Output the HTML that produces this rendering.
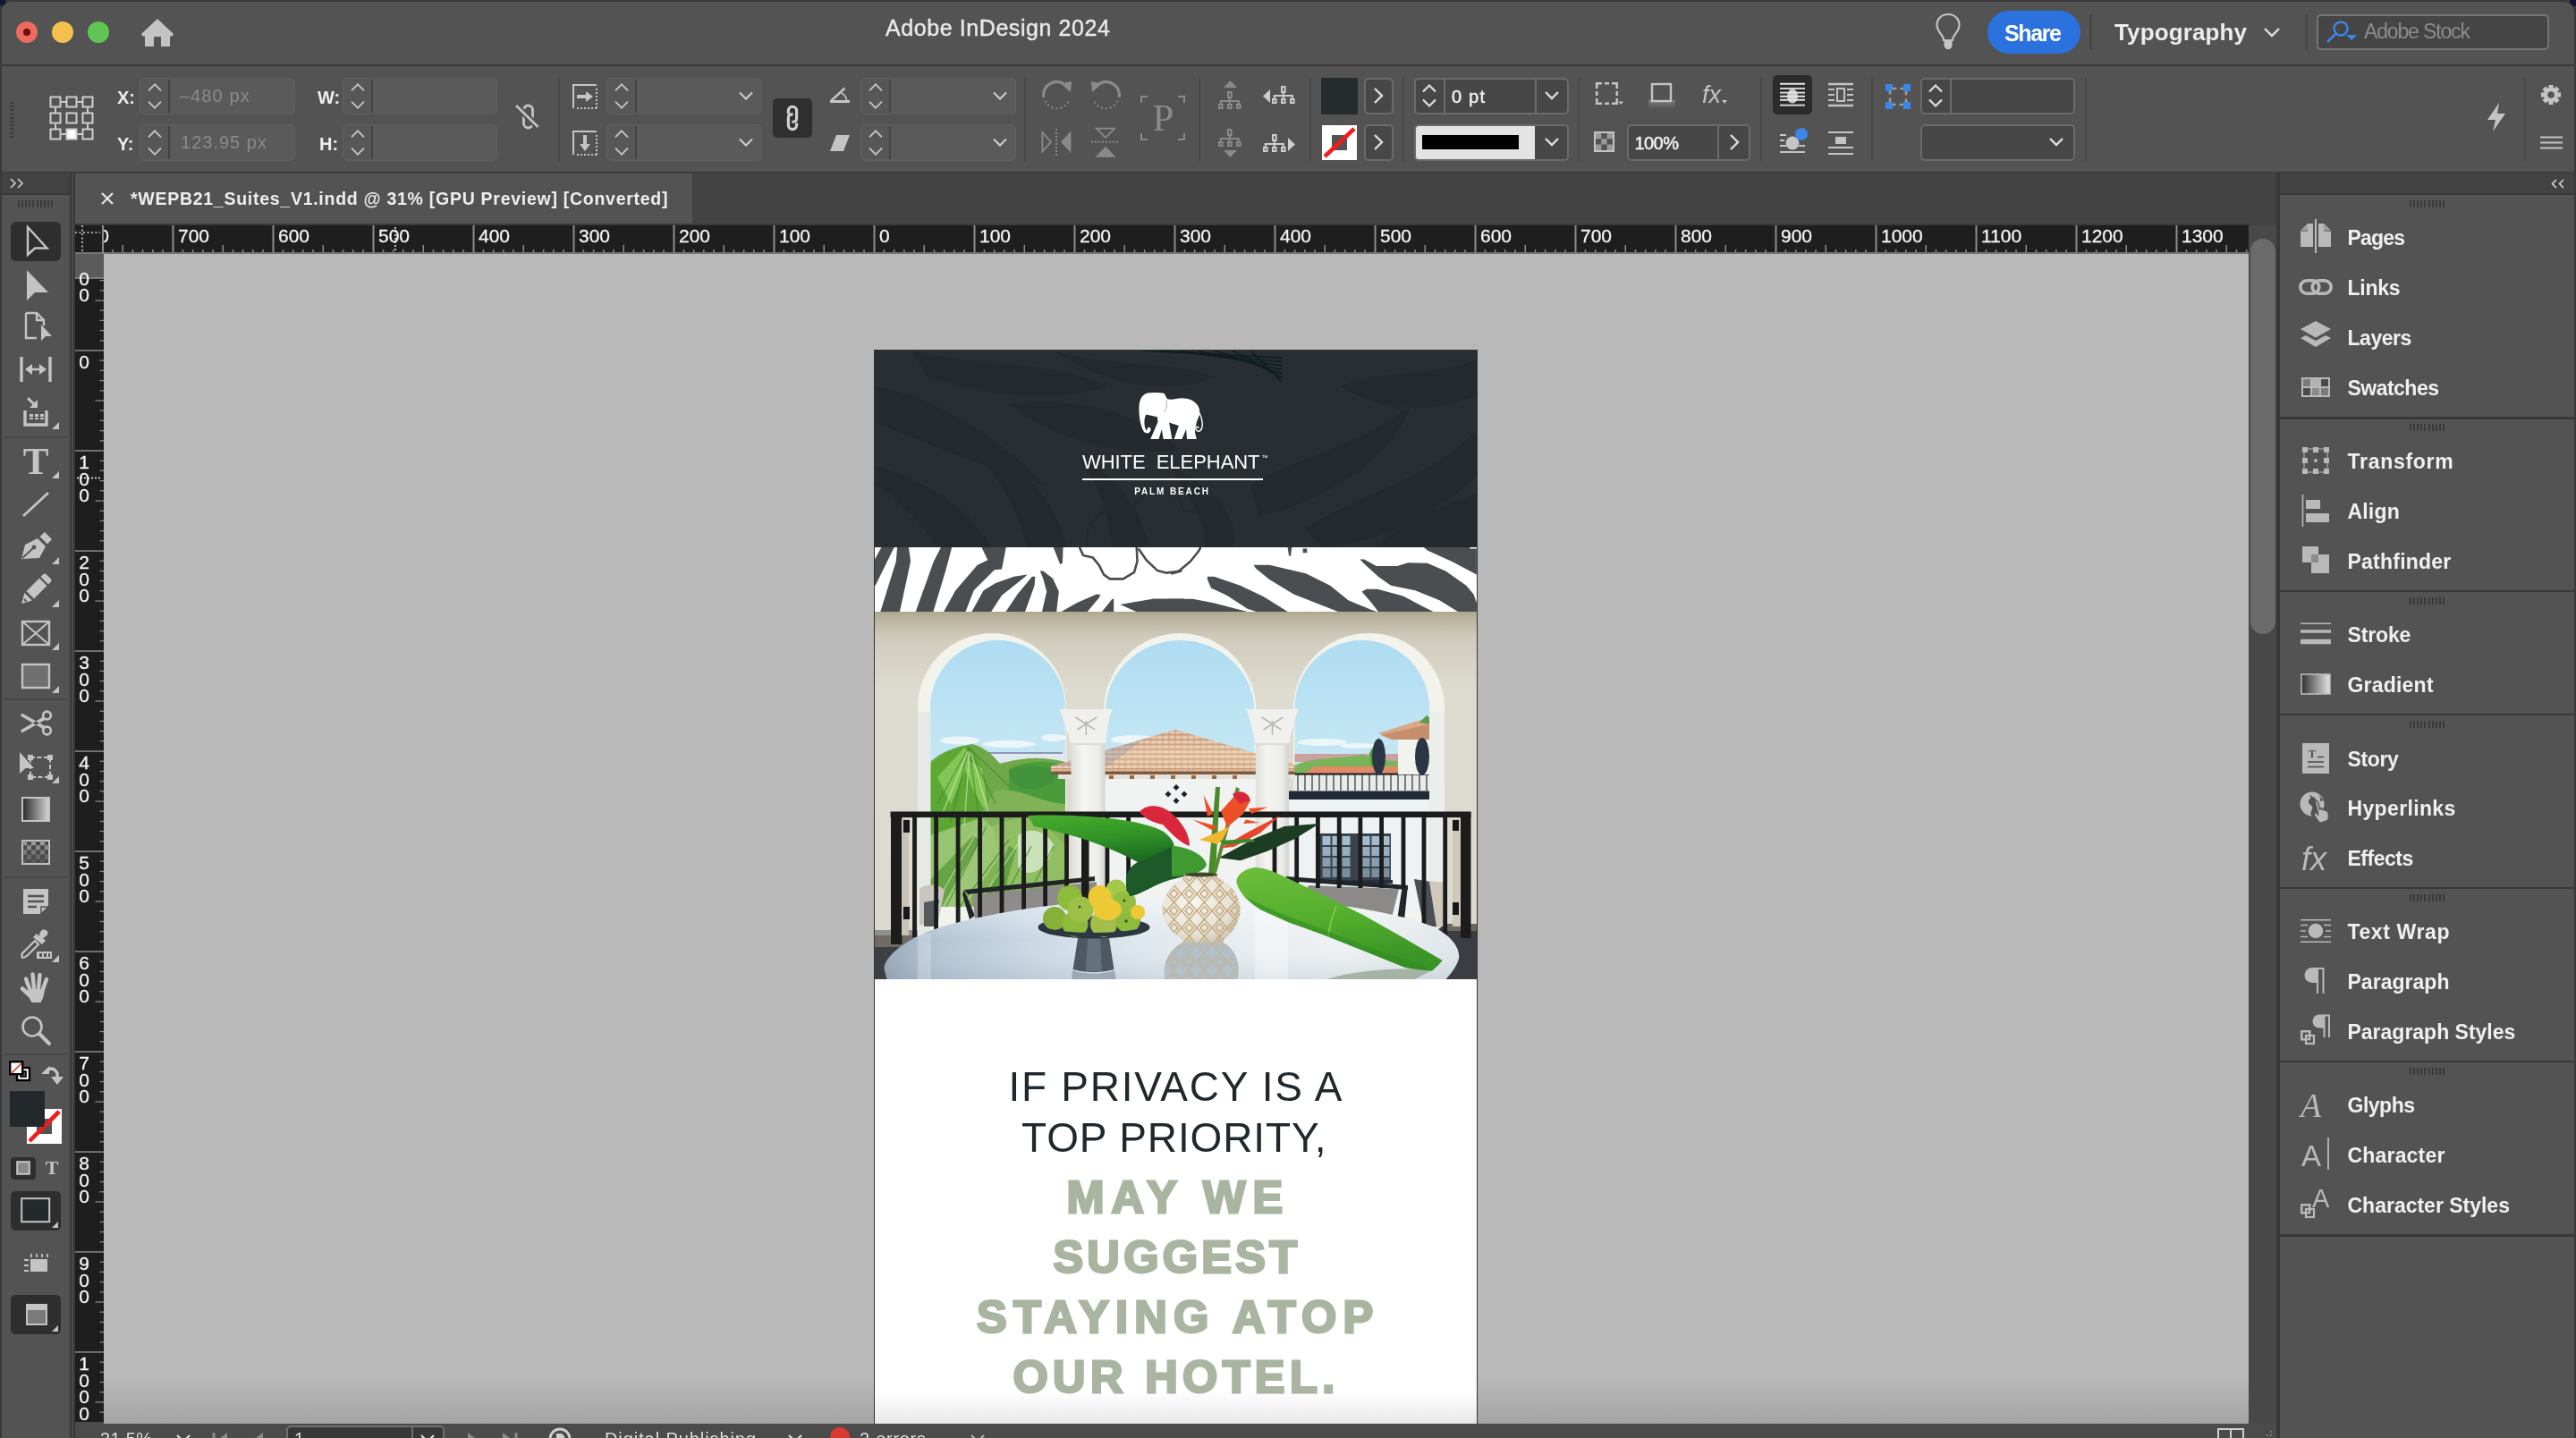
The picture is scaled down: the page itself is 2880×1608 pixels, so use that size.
<!DOCTYPE html>
<html><head><meta charset="utf-8"><title>Adobe InDesign 2024</title>
<style>
html,body{margin:0;padding:0;background:#393939;}
body{width:2880px;height:1608px;position:relative;overflow:hidden;font-family:"Liberation Sans",sans-serif;}
#root{position:absolute;left:0;top:0;width:2880px;height:1608px;overflow:hidden;will-change:transform;}
.b{position:absolute;display:block;}
.t{position:absolute;white-space:pre;}
</style></head><body><div id="root">
<div class="b" style="left:0.00px;top:0.00px;width:2880.00px;height:1608.00px;background:#393939;"></div>
<div class="b" style="left:2873.00px;top:0.00px;width:7.00px;height:7.00px;background:#15172f;"></div>
<div class="b" style="left:2.00px;top:2.00px;width:2876.00px;height:1640.00px;background:#535353;border-radius:11px 11px 0 0;"></div>
<div class="b" style="left:0.00px;top:0.00px;width:6.00px;height:6.00px;background:#0c1a33;"></div>
<div class="b" style="left:2.00px;top:2.00px;width:40.00px;height:40.00px;background:#535353;border-radius:11px 0 0 0;"></div>
<div class="b" style="left:2.00px;top:72.00px;width:2876.00px;height:2.00px;background:#383838;"></div>
<div class="b" style="left:18.00px;top:24.00px;width:24.00px;height:24.00px;background:#ed6a5e;border-radius:50%;"></div>
<div class="b" style="left:58.00px;top:24.00px;width:24.00px;height:24.00px;background:#f5bf4f;border-radius:50%;"></div>
<div class="b" style="left:98.00px;top:24.00px;width:24.00px;height:24.00px;background:#61c554;border-radius:50%;"></div>
<div class="b" style="left:26.00px;top:32.00px;width:8.00px;height:8.00px;background:#6b100b;border-radius:50%;"></div>
<svg class="b" style="left:158.00px;top:21.00px;" width="36" height="31" viewBox="0 0 36 31"><path d="M18 0 L36 17 L34.5 19.5 L32 19.5 L32 31 L22 31 L22 20 L14 20 L14 31 L4 31 L4 19.5 L1.5 19.5 L0 17 Z" fill="#c4c4c4"/></svg>
<div class="t" style="left:990.00px;top:18.74px;font:25.00px/1 'Liberation Sans',sans-serif;color:#e9e9e9;letter-spacing:0.583px;-webkit-text-stroke:0.4px #e9e9e9;">Adobe InDesign 2024</div>
<svg class="b" style="left:2160.00px;top:12.00px;" width="36" height="48" viewBox="0 0 36 48"><path d="M18 4 C10.5 4 5.5 9.5 5.5 16 C5.5 21 8.5 24 11 27.5 C12.5 29.5 13 31 13 33 L23 33 C23 31 23.5 29.5 25 27.5 C27.5 24 30.5 21 30.5 16 C30.5 9.5 25.5 4 18 4 Z" fill="none" stroke="#c4c4c4" stroke-width="2.2"/><path d="M13.5 34 L22.5 34 L22.5 40 L20 43 L16 43 L13.5 40 Z" fill="#c4c4c4"/></svg>
<div class="b" style="left:2222.00px;top:12.00px;width:104.00px;height:48.00px;background:#2c72de;border-radius:24px;"></div>
<div class="t" style="left:2241.00px;top:25.24px;font:bold 25.00px/1 'Liberation Sans',sans-serif;color:#ffffff;letter-spacing:-1.375px;">Share</div>
<div class="b" style="left:2336.00px;top:16.00px;width:3.00px;height:40.00px;background:#474747;"></div>
<div class="t" style="left:2364.00px;top:22.79px;font:bold 26.00px/1 'Liberation Sans',sans-serif;color:#ececec;letter-spacing:0.122px;">Typography</div>
<svg class="b" style="left:2528.00px;top:28.00px;" width="24" height="16" viewBox="0 0 24 16"><path d="M4 4 L12 12 L20 4" fill="none" stroke="#e0e0e0" stroke-width="2.4"/></svg>
<div class="b" style="left:2577.00px;top:16.00px;width:3.00px;height:40.00px;background:#474747;"></div>
<div class="b" style="left:2590.00px;top:16.00px;width:260.00px;height:40.00px;background:#454545;border:2px solid #757575;border-radius:5px;box-sizing:border-box;"></div>
<svg class="b" style="left:2598.00px;top:22.00px;" width="40" height="26" viewBox="0 0 40 26"><circle cx="19" cy="10" r="7.5" fill="none" stroke="#3b86e6" stroke-width="2.4"/><path d="M13.5 15.5 L4 25" stroke="#3b86e6" stroke-width="2.6"/><path d="M25 17 L37 17 L31 23 Z" fill="#3b86e6"/></svg>
<div class="t" style="left:2643.00px;top:24.13px;font:23.00px/1 'Liberation Sans',sans-serif;color:#8c8c8c;letter-spacing:-1.153px;">Adobe Stock</div>
<div class="b" style="left:2.00px;top:191.50px;width:2876.00px;height:2.50px;background:#383838;"></div>
<div class="b" style="left:11.00px;top:114.00px;width:4.00px;height:2.00px;background:#3a3a3a;"></div>
<div class="b" style="left:11.00px;top:118.20px;width:4.00px;height:2.00px;background:#3a3a3a;"></div>
<div class="b" style="left:11.00px;top:122.40px;width:4.00px;height:2.00px;background:#3a3a3a;"></div>
<div class="b" style="left:11.00px;top:126.60px;width:4.00px;height:2.00px;background:#3a3a3a;"></div>
<div class="b" style="left:11.00px;top:130.80px;width:4.00px;height:2.00px;background:#3a3a3a;"></div>
<div class="b" style="left:11.00px;top:135.00px;width:4.00px;height:2.00px;background:#3a3a3a;"></div>
<div class="b" style="left:11.00px;top:139.20px;width:4.00px;height:2.00px;background:#3a3a3a;"></div>
<div class="b" style="left:11.00px;top:143.40px;width:4.00px;height:2.00px;background:#3a3a3a;"></div>
<div class="b" style="left:11.00px;top:147.60px;width:4.00px;height:2.00px;background:#3a3a3a;"></div>
<div class="b" style="left:11.00px;top:151.80px;width:4.00px;height:2.00px;background:#3a3a3a;"></div>
<svg class="b" style="left:55.00px;top:107.00px;" width="50" height="50" viewBox="0 0 50 50"><rect x="1.5" y="1.5" width="11" height="11" fill="none" stroke="#cfcfcf" stroke-width="2"/><rect x="19.5" y="1.5" width="11" height="11" fill="none" stroke="#cfcfcf" stroke-width="2"/><rect x="37.5" y="1.5" width="11" height="11" fill="none" stroke="#cfcfcf" stroke-width="2"/><rect x="1.5" y="19.5" width="11" height="11" fill="none" stroke="#cfcfcf" stroke-width="2"/><rect x="19.5" y="19.5" width="11" height="11" fill="none" stroke="#cfcfcf" stroke-width="2"/><rect x="37.5" y="19.5" width="11" height="11" fill="none" stroke="#cfcfcf" stroke-width="2"/><rect x="1.5" y="37.5" width="11" height="11" fill="none" stroke="#cfcfcf" stroke-width="2"/><rect x="19.5" y="37.5" width="11" height="11" fill="#ffffff" stroke="#cfcfcf" stroke-width="2"/><rect x="37.5" y="37.5" width="11" height="11" fill="none" stroke="#cfcfcf" stroke-width="2"/><path d="M13.5 7 H19.5 M31.5 7 H37.5 M13.5 43 H19.5 M31.5 43 H37.5 M7 13.5 V19.5 M7 31.5 V37.5 M43 13.5 V19.5 M43 31.5 V37.5" stroke="#cfcfcf" stroke-width="2"/></svg>
<div class="t" style="left:131.00px;top:99.07px;font:bold 20.00px/1 'Liberation Sans',sans-serif;color:#ededed;">X:</div>
<div class="t" style="left:131.00px;top:151.07px;font:bold 20.00px/1 'Liberation Sans',sans-serif;color:#ededed;">Y:</div>
<div class="b" style="left:156.00px;top:86.50px;width:174.00px;height:41.00px;background:#5a5a5a;border:1.5px solid #5f5f5f;border-radius:5px;box-sizing:border-box;"></div><div class="b" style="left:157.50px;top:88.00px;width:30.00px;height:38.00px;background:#575757;border-radius:4px 0 0 4px;"></div><div class="b" style="left:187.50px;top:88.50px;width:2.00px;height:37.00px;background:#444444;"></div><svg class="b" style="left:164.00px;top:92.50px;" width="18" height="29" viewBox="0 0 18 29"><path d="M2 8.3 L9 1.3 L16 8.3 M2 20.7 L9 27.7 L16 20.7" fill="none" stroke="#c6c6c6" stroke-width="1.8"/></svg>
<div class="b" style="left:156.00px;top:138.50px;width:174.00px;height:41.00px;background:#5a5a5a;border:1.5px solid #5f5f5f;border-radius:5px;box-sizing:border-box;"></div><div class="b" style="left:157.50px;top:140.00px;width:30.00px;height:38.00px;background:#575757;border-radius:4px 0 0 4px;"></div><div class="b" style="left:187.50px;top:140.50px;width:2.00px;height:37.00px;background:#444444;"></div><svg class="b" style="left:164.00px;top:144.50px;" width="18" height="29" viewBox="0 0 18 29"><path d="M2 8.3 L9 1.3 L16 8.3 M2 20.7 L9 27.7 L16 20.7" fill="none" stroke="#c6c6c6" stroke-width="1.8"/></svg>
<div class="t" style="left:200.60px;top:97.07px;font:20.00px/1 'Liberation Sans',sans-serif;color:#8b8b8b;letter-spacing:1.167px;">–480 px</div>
<div class="t" style="left:202.00px;top:149.07px;font:20.00px/1 'Liberation Sans',sans-serif;color:#8b8b8b;letter-spacing:1.012px;">123.95 px</div>
<div class="t" style="left:355.00px;top:99.07px;font:bold 20.00px/1 'Liberation Sans',sans-serif;color:#ededed;">W:</div>
<div class="t" style="left:357.00px;top:151.07px;font:bold 20.00px/1 'Liberation Sans',sans-serif;color:#ededed;">H:</div>
<div class="b" style="left:383.00px;top:86.50px;width:173.00px;height:41.00px;background:#5a5a5a;border:1.5px solid #5f5f5f;border-radius:5px;box-sizing:border-box;"></div><div class="b" style="left:384.50px;top:88.00px;width:30.00px;height:38.00px;background:#575757;border-radius:4px 0 0 4px;"></div><div class="b" style="left:414.50px;top:88.50px;width:2.00px;height:37.00px;background:#444444;"></div><svg class="b" style="left:391.00px;top:92.50px;" width="18" height="29" viewBox="0 0 18 29"><path d="M2 8.3 L9 1.3 L16 8.3 M2 20.7 L9 27.7 L16 20.7" fill="none" stroke="#c6c6c6" stroke-width="1.8"/></svg>
<div class="b" style="left:383.00px;top:138.50px;width:173.00px;height:41.00px;background:#5a5a5a;border:1.5px solid #5f5f5f;border-radius:5px;box-sizing:border-box;"></div><div class="b" style="left:384.50px;top:140.00px;width:30.00px;height:38.00px;background:#575757;border-radius:4px 0 0 4px;"></div><div class="b" style="left:414.50px;top:140.50px;width:2.00px;height:37.00px;background:#444444;"></div><svg class="b" style="left:391.00px;top:144.50px;" width="18" height="29" viewBox="0 0 18 29"><path d="M2 8.3 L9 1.3 L16 8.3 M2 20.7 L9 27.7 L16 20.7" fill="none" stroke="#c6c6c6" stroke-width="1.8"/></svg>
<svg class="b" style="left:574.00px;top:112.00px;" width="36" height="36" viewBox="0 0 36 36"><g fill="none" stroke="#c4c4c4" stroke-width="2.8"><rect x="11.5" y="6" width="10" height="25" rx="5"/></g><path d="M3 6 L27.6 30" stroke="#535353" stroke-width="7"/><path d="M3 6 L27.6 30" stroke="#c4c4c4" stroke-width="2.6"/></svg>
<div class="b" style="left:624.00px;top:86.00px;width:2.00px;height:94.00px;background:#494949;"></div>
<svg class="b" style="left:640.00px;top:94.00px;" width="28" height="28" viewBox="0 0 28 28"><path d="M1 27 V1 H27" fill="none" stroke="#c4c4c4" stroke-width="2"/><path d="M5 27 H27 M27 5 V27" stroke="#c4c4c4" stroke-width="2" stroke-dasharray="2 2"/><path d="M5 12 H15 V8 L23 14 L15 20 V16 H5 Z" fill="#c4c4c4"/></svg>
<svg class="b" style="left:640.00px;top:146.00px;" width="28" height="28" viewBox="0 0 28 28"><path d="M1 27 V1 H27" fill="none" stroke="#c4c4c4" stroke-width="2"/><path d="M5 27 H27 M27 5 V27" stroke="#c4c4c4" stroke-width="2" stroke-dasharray="2 2"/><path d="M12 5 V15 H8 L14 23 L20 15 H16 V5 Z" fill="#c4c4c4"/></svg>
<div class="b" style="left:678.00px;top:86.50px;width:174.00px;height:41.00px;background:#5a5a5a;border:1.5px solid #5f5f5f;border-radius:5px;box-sizing:border-box;"></div><div class="b" style="left:679.50px;top:88.00px;width:30.00px;height:38.00px;background:#575757;border-radius:4px 0 0 4px;"></div><div class="b" style="left:709.50px;top:88.50px;width:2.00px;height:37.00px;background:#444444;"></div><svg class="b" style="left:686.00px;top:92.50px;" width="18" height="29" viewBox="0 0 18 29"><path d="M2 8.3 L9 1.3 L16 8.3 M2 20.7 L9 27.7 L16 20.7" fill="none" stroke="#c6c6c6" stroke-width="1.8"/></svg><svg class="b" style="left:825.00px;top:101.00px;" width="18" height="12" viewBox="0 0 18 12"><path d="M2 2.5 L9 9.5 L16 2.5" fill="none" stroke="#d0d0d0" stroke-width="2"/></svg>
<div class="b" style="left:678.00px;top:138.50px;width:174.00px;height:41.00px;background:#5a5a5a;border:1.5px solid #5f5f5f;border-radius:5px;box-sizing:border-box;"></div><div class="b" style="left:679.50px;top:140.00px;width:30.00px;height:38.00px;background:#575757;border-radius:4px 0 0 4px;"></div><div class="b" style="left:709.50px;top:140.50px;width:2.00px;height:37.00px;background:#444444;"></div><svg class="b" style="left:686.00px;top:144.50px;" width="18" height="29" viewBox="0 0 18 29"><path d="M2 8.3 L9 1.3 L16 8.3 M2 20.7 L9 27.7 L16 20.7" fill="none" stroke="#c6c6c6" stroke-width="1.8"/></svg><svg class="b" style="left:825.00px;top:153.00px;" width="18" height="12" viewBox="0 0 18 12"><path d="M2 2.5 L9 9.5 L16 2.5" fill="none" stroke="#d0d0d0" stroke-width="2"/></svg>
<div class="b" style="left:864.00px;top:110.00px;width:44.00px;height:44.00px;background:#2f2f2f;border-radius:5px;"></div>
<svg class="b" style="left:874.00px;top:116.00px;" width="24" height="32" viewBox="0 0 24 32"><g fill="none" stroke="#d0d0d0" stroke-width="3.2"><path d="M7.4 11.6 V7.85 A4.6 4.6 0 0 1 16.6 7.85 V16.2 Q16.6 20.6 11.4 20.2"/><path d="M16.6 21.6 V24 A4.6 4.6 0 0 1 7.4 24 V15.8 Q7.4 11.4 12.6 11.9"/></g></svg>
<svg class="b" style="left:927.00px;top:96.00px;" width="24" height="20" viewBox="0 0 24 20"><path d="M1 17.5 H23" stroke="#c4c4c4" stroke-width="3"/><path d="M2 17 L17.5 2.5" fill="none" stroke="#c4c4c4" stroke-width="2.4"/><path d="M13.5 8 A 10 10 0 0 1 19.5 16" fill="none" stroke="#c4c4c4" stroke-width="1.8"/></svg>
<svg class="b" style="left:927.00px;top:150.00px;" width="24" height="20" viewBox="0 0 24 20"><path d="M8 1 H23 L16 19 H1 Z" fill="#c4c4c4"/></svg>
<div class="b" style="left:962.00px;top:86.50px;width:174.00px;height:41.00px;background:#5a5a5a;border:1.5px solid #5f5f5f;border-radius:5px;box-sizing:border-box;"></div><div class="b" style="left:963.50px;top:88.00px;width:30.00px;height:38.00px;background:#575757;border-radius:4px 0 0 4px;"></div><div class="b" style="left:993.50px;top:88.50px;width:2.00px;height:37.00px;background:#444444;"></div><svg class="b" style="left:970.00px;top:92.50px;" width="18" height="29" viewBox="0 0 18 29"><path d="M2 8.3 L9 1.3 L16 8.3 M2 20.7 L9 27.7 L16 20.7" fill="none" stroke="#c6c6c6" stroke-width="1.8"/></svg><svg class="b" style="left:1109.00px;top:101.00px;" width="18" height="12" viewBox="0 0 18 12"><path d="M2 2.5 L9 9.5 L16 2.5" fill="none" stroke="#d0d0d0" stroke-width="2"/></svg>
<div class="b" style="left:962.00px;top:138.50px;width:174.00px;height:41.00px;background:#5a5a5a;border:1.5px solid #5f5f5f;border-radius:5px;box-sizing:border-box;"></div><div class="b" style="left:963.50px;top:140.00px;width:30.00px;height:38.00px;background:#575757;border-radius:4px 0 0 4px;"></div><div class="b" style="left:993.50px;top:140.50px;width:2.00px;height:37.00px;background:#444444;"></div><svg class="b" style="left:970.00px;top:144.50px;" width="18" height="29" viewBox="0 0 18 29"><path d="M2 8.3 L9 1.3 L16 8.3 M2 20.7 L9 27.7 L16 20.7" fill="none" stroke="#c6c6c6" stroke-width="1.8"/></svg><svg class="b" style="left:1109.00px;top:153.00px;" width="18" height="12" viewBox="0 0 18 12"><path d="M2 2.5 L9 9.5 L16 2.5" fill="none" stroke="#d0d0d0" stroke-width="2"/></svg>
<div class="b" style="left:1145.00px;top:86.00px;width:2.00px;height:94.00px;background:#494949;"></div>
<svg class="b" style="left:1163.00px;top:88.00px;" width="38" height="38" viewBox="0 0 38 38"><path d="M3.9 21 A14.85 14.85 0 0 1 26 5.6" fill="none" stroke="#8a8a8a" stroke-width="3.2"/><path d="M23 5.4 L35.1 3 L33.8 15.1 Z" fill="#8a8a8a"/><path d="M5.5 25 A14.5 14.5 0 0 0 32.5 23" fill="none" stroke="#8a8a8a" stroke-width="2.2" stroke-dasharray="1.8 3.2"/></svg>
<svg class="b" style="left:1217.00px;top:88.00px;" width="38" height="38" viewBox="0 0 38 38"><path d="M34.1 21 A14.85 14.85 0 0 0 12 5.6" fill="none" stroke="#8a8a8a" stroke-width="3.2"/><path d="M15 5.4 L2.9 3 L4.2 15.1 Z" fill="#8a8a8a"/><path d="M32.5 25 A14.5 14.5 0 0 1 5.5 23" fill="none" stroke="#8a8a8a" stroke-width="2.2" stroke-dasharray="1.8 3.2"/></svg>
<svg class="b" style="left:1163.00px;top:140.00px;" width="36" height="38" viewBox="0 0 36 38"><path d="M2.4 8 L12 18.8 L2.4 29.6 Z" fill="none" stroke="#8a8a8a" stroke-width="1.8"/><path d="M34.4 6.6 L23 18.8 L34.4 31 Z" fill="#8a8a8a"/><path d="M18 4 V34" stroke="#8a8a8a" stroke-width="2" stroke-dasharray="2 2"/></svg>
<svg class="b" style="left:1217.00px;top:140.00px;" width="36" height="38" viewBox="0 0 36 38"><path d="M9 3.6 L29 3.6 L19 14 Z" fill="none" stroke="#8a8a8a" stroke-width="1.8"/><path d="M7.5 35.7 L30.6 35.7 L19 23.8 Z" fill="#8a8a8a"/><path d="M3 18.8 H33" stroke="#8a8a8a" stroke-width="2" stroke-dasharray="2 2"/></svg>
<svg class="b" style="left:1274.00px;top:106.00px;" width="52" height="52" viewBox="0 0 52 52"><path d="M2 9 V2 H9 M43 2 H50 V9 M50 43 V50 H43 M9 50 H2 V43" fill="none" stroke="#8a8a8a" stroke-width="2"/></svg>
<div class="t" style="left:1288.54px;top:109.99px;font:43.00px/1 'Liberation Serif',serif;color:#8a8a8a;">P</div>
<div class="b" style="left:1340.00px;top:86.00px;width:2.00px;height:94.00px;background:#494949;"></div>
<svg class="b" style="left:1362.20px;top:102.00px;" width="26" height="21" viewBox="0 0 26 21"><g fill="none" stroke="#8a8a8a" stroke-width="2"><rect x="11" y="1" width="3.6" height="6"/><rect x="1" y="15" width="3.6" height="4"/><rect x="11" y="15" width="3.6" height="4"/><rect x="21" y="15" width="3.6" height="4"/><path d="M12.8 8 V14 M2.8 14 V11 H22.8 V14"/></g></svg>
<svg class="b" style="left:1367.50px;top:90.30px;" width="15" height="8" viewBox="0 0 15 8"><path d="M0 8 L7.5 0 L15 8 Z" fill="#8a8a8a"/></svg>
<svg class="b" style="left:1422.20px;top:96.00px;" width="26" height="21" viewBox="0 0 26 21"><g fill="none" stroke="#cdcdcd" stroke-width="2"><rect x="11" y="1" width="3.6" height="6"/><rect x="1" y="15" width="3.6" height="4"/><rect x="11" y="15" width="3.6" height="4"/><rect x="21" y="15" width="3.6" height="4"/><path d="M12.8 8 V14 M2.8 14 V11 H22.8 V14"/></g></svg>
<svg class="b" style="left:1412.00px;top:99.50px;" width="8" height="15" viewBox="0 0 8 15"><path d="M8 0 L0 7.5 L8 15 Z" fill="#cdcdcd"/></svg>
<svg class="b" style="left:1362.20px;top:144.30px;" width="26" height="21" viewBox="0 0 26 21"><g fill="none" stroke="#8a8a8a" stroke-width="2"><rect x="11" y="1" width="3.6" height="6"/><rect x="1" y="15" width="3.6" height="4"/><rect x="11" y="15" width="3.6" height="4"/><rect x="21" y="15" width="3.6" height="4"/><path d="M12.8 8 V14 M2.8 14 V11 H22.8 V14"/></g></svg>
<svg class="b" style="left:1367.50px;top:168.20px;" width="15" height="8" viewBox="0 0 15 8"><path d="M0 0 L7.5 8 L15 0 Z" fill="#8a8a8a"/></svg>
<svg class="b" style="left:1412.00px;top:150.20px;" width="26" height="21" viewBox="0 0 26 21"><g fill="none" stroke="#cdcdcd" stroke-width="2"><rect x="11" y="1" width="3.6" height="6"/><rect x="1" y="15" width="3.6" height="4"/><rect x="11" y="15" width="3.6" height="4"/><rect x="21" y="15" width="3.6" height="4"/><path d="M12.8 8 V14 M2.8 14 V11 H22.8 V14"/></g></svg>
<svg class="b" style="left:1440.20px;top:153.60px;" width="8" height="15" viewBox="0 0 8 15"><path d="M0 0 L8 7.5 L0 15 Z" fill="#cdcdcd"/></svg>
<div class="b" style="left:1464.00px;top:86.00px;width:2.00px;height:94.00px;background:#494949;"></div>
<div class="b" style="left:1477.00px;top:86.50px;width:41.00px;height:41.00px;background:#262b2e;"></div>
<div class="b" style="left:1525.00px;top:86.50px;width:33.00px;height:41.00px;background:#474747;border:2px solid #6b6b6b;border-radius:5px;box-sizing:border-box;"></div>
<svg class="b" style="left:1533.00px;top:97.00px;" width="16" height="20" viewBox="0 0 16 20"><path d="M4 2 L12 10 L4 18" fill="none" stroke="#e0e0e0" stroke-width="2.4"/></svg>
<div class="b" style="left:1478.00px;top:140.00px;width:39.00px;height:39.00px;background:#ffffff;"></div>
<svg class="b" style="left:1478.00px;top:140.00px;" width="39" height="39" viewBox="0 0 39 39"><rect x="11" y="11" width="17" height="17" fill="#535353"/><path d="M3 35 L36 4" stroke="#f21b1b" stroke-width="4.5"/></svg>
<div class="b" style="left:1525.00px;top:138.50px;width:33.00px;height:41.00px;background:#474747;border:2px solid #6b6b6b;border-radius:5px;box-sizing:border-box;"></div>
<svg class="b" style="left:1533.00px;top:149.00px;" width="16" height="20" viewBox="0 0 16 20"><path d="M4 2 L12 10 L4 18" fill="none" stroke="#e0e0e0" stroke-width="2.4"/></svg>
<div class="b" style="left:1568.00px;top:86.00px;width:2.00px;height:94.00px;background:#494949;"></div>
<div class="b" style="left:1581.00px;top:86.50px;width:173.00px;height:41.00px;background:#474747;border:2px solid #6b6b6b;border-radius:5px;box-sizing:border-box;"></div>
<div class="b" style="left:1614.00px;top:88.00px;width:2.00px;height:38.00px;background:#6b6b6b;"></div>
<div class="b" style="left:1716.00px;top:88.00px;width:2.00px;height:38.00px;background:#6b6b6b;"></div>
<svg class="b" style="left:1589.00px;top:92.00px;" width="18" height="30" viewBox="0 0 18 30"><path d="M2 10.5 L9 3.5 L16 10.5 M2 19.5 L9 26.5 L16 19.5" fill="none" stroke="#e0e0e0" stroke-width="2.2"/></svg>
<div class="t" style="left:1623.00px;top:97.87px;font:20.00px/1 'Liberation Sans',sans-serif;color:#f0f0f0;letter-spacing:1.200px;-webkit-text-stroke:0.5px #f0f0f0;">0 pt</div>
<svg class="b" style="left:1726.00px;top:101.00px;" width="18" height="12" viewBox="0 0 18 12"><path d="M2 2 L9 9 L16 2" fill="none" stroke="#e0e0e0" stroke-width="2.4"/></svg>
<div class="b" style="left:1581.00px;top:138.50px;width:173.00px;height:41.00px;background:#474747;border:2px solid #6b6b6b;border-radius:5px;box-sizing:border-box;"></div>
<div class="b" style="left:1583.00px;top:140.50px;width:133.00px;height:37.00px;background:#e3e3e3;border-radius:3px 0 0 3px;"></div>
<div class="b" style="left:1590.00px;top:151.00px;width:108.00px;height:16.00px;background:#000000;"></div>
<svg class="b" style="left:1726.00px;top:153.00px;" width="18" height="12" viewBox="0 0 18 12"><path d="M2 2 L9 9 L16 2" fill="none" stroke="#e0e0e0" stroke-width="2.4"/></svg>
<div class="b" style="left:1764.00px;top:86.00px;width:2.00px;height:94.00px;background:#494949;"></div>
<svg class="b" style="left:1783.00px;top:91.00px;" width="32" height="28" viewBox="0 0 32 28"><path d="M8 2.2 H2.2 V8 M11 2.2 H16 M19 2.2 H24.8 V8 M24.8 11 V16 M24.8 19 V24.8 H19 M16 24.8 H11 M8 24.8 H2.2 V19 M2.2 16 V11" fill="none" stroke="#c4c4c4" stroke-width="2.6"/><path d="M26.5 22.5 H32 L29.2 26 Z" fill="#c4c4c4"/></svg>
<svg class="b" style="left:1842.00px;top:90.00px;" width="32" height="34" viewBox="0 0 32 34"><defs><linearGradient id="sh" x1="0" y1="0" x2="0" y2="1"><stop offset="0" stop-color="#8a8a8a" stop-opacity="0.7"/><stop offset="1" stop-color="#8a8a8a" stop-opacity="0"/></linearGradient></defs><rect x="1" y="22" width="30" height="10" fill="url(#sh)"/><rect x="5" y="4" width="21" height="19" fill="#535353" stroke="#c4c4c4" stroke-width="2.4"/></svg>
<div class="t" style="left:1903.00px;top:93.14px;font:italic 27.00px/1 'Liberation Sans',sans-serif;color:#c4c4c4;">fx</div>
<svg class="b" style="left:1925.00px;top:112.00px;" width="8" height="6" viewBox="0 0 8 6"><path d="M0 0 H6 L3 4 Z" fill="#c4c4c4"/></svg>
<svg class="b" style="left:1782.00px;top:147.00px;" width="23" height="23" viewBox="0 0 23 23"><rect x="1" y="1" width="21" height="21" fill="none" stroke="#c4c4c4" stroke-width="2"/><path d="M2 2 H8.3 V8.3 H2 Z M14.6 2 H21 V8.3 H14.6 Z M8.3 8.3 H14.6 V14.6 H8.3 Z M2 14.6 H8.3 V21 H2 Z M14.6 14.6 H21 V21 H14.6 Z" fill="#9a9a9a"/></svg>
<div class="b" style="left:1819.00px;top:138.50px;width:138.00px;height:41.00px;background:#474747;border:2px solid #6b6b6b;border-radius:5px;box-sizing:border-box;"></div>
<div class="b" style="left:1920.00px;top:140.00px;width:2.00px;height:38.00px;background:#6b6b6b;"></div>
<div class="t" style="left:1827.50px;top:150.07px;font:20.00px/1 'Liberation Sans',sans-serif;color:#f0f0f0;letter-spacing:-0.567px;-webkit-text-stroke:0.5px #f0f0f0;">100%</div>
<svg class="b" style="left:1931.00px;top:149.00px;" width="16" height="20" viewBox="0 0 16 20"><path d="M4 2 L12 10 L4 18" fill="none" stroke="#e0e0e0" stroke-width="2.4"/></svg>
<div class="b" style="left:1968.00px;top:86.00px;width:2.00px;height:94.00px;background:#494949;"></div>
<div class="b" style="left:1982.00px;top:84.00px;width:44.00px;height:44.00px;background:#2c2c2c;border-radius:5px;"></div>
<svg class="b" style="left:1989.00px;top:92.00px;" width="30" height="28" viewBox="0 0 30 28"><ellipse cx="15" cy="15.5" rx="6" ry="8" fill="#c8c8c8"/><path d="M1 1.8 H29 M1 6.9 H29 M1 11.6 H29 M1 15.8 H29 M1 19.8 H29 M1 25.6 H29" stroke="#e4e4e4" stroke-width="1.9"/></svg>
<svg class="b" style="left:2043.00px;top:92.00px;" width="30" height="28" viewBox="0 0 30 28"><path d="M1 2 H29 M1 26 H29" stroke="#c4c4c4" stroke-width="2.4"/><rect x="11" y="7" width="8" height="14" fill="none" stroke="#c4c4c4" stroke-width="2"/><path d="M1 8 H8 M1 14 H8 M1 20 H8 M22 8 H29 M22 14 H29 M22 20 H29" stroke="#c4c4c4" stroke-width="2"/></svg>
<svg class="b" style="left:1989.00px;top:142.00px;" width="36" height="32" viewBox="0 0 36 32"><path d="M1 9 H8 M1 15 H6 M1 21 H8 M1 28 H29 M22 21 H29" stroke="#c4c4c4" stroke-width="2.2"/><circle cx="15" cy="18" r="7.5" fill="#c4c4c4"/><circle cx="25" cy="8" r="7" fill="#3b86e6"/></svg>
<svg class="b" style="left:2043.00px;top:146.00px;" width="30" height="28" viewBox="0 0 30 28"><path d="M1 2 H29 M1 19 H29 M1 26 H29" stroke="#c4c4c4" stroke-width="2.2"/><rect x="9" y="7" width="12" height="8" fill="#c4c4c4"/></svg>
<div class="b" style="left:2092.00px;top:86.00px;width:2.00px;height:94.00px;background:#494949;"></div>
<svg class="b" style="left:2108.00px;top:94.00px;" width="28" height="28" viewBox="0 0 28 28"><rect x="5" y="5" width="18" height="18" fill="none" stroke="#9a9a9a" stroke-width="2.6" stroke-dasharray="5 4" stroke-dashoffset="-2.5"/><rect x="0" y="0" width="8" height="8" fill="#3b86e6"/><rect x="20" y="0" width="8" height="8" fill="#3b86e6"/><rect x="0" y="20" width="8" height="8" fill="#3b86e6"/><rect x="20" y="20" width="8" height="8" fill="#3b86e6"/></svg>
<div class="b" style="left:2147.00px;top:86.50px;width:173.00px;height:41.00px;background:#474747;border:2px solid #6b6b6b;border-radius:5px;box-sizing:border-box;"></div>
<div class="b" style="left:2180.00px;top:88.00px;width:2.00px;height:38.00px;background:#6b6b6b;"></div>
<svg class="b" style="left:2155.00px;top:92.00px;" width="18" height="30" viewBox="0 0 18 30"><path d="M2 10.5 L9 3.5 L16 10.5 M2 19.5 L9 26.5 L16 19.5" fill="none" stroke="#e0e0e0" stroke-width="2.2"/></svg>
<div class="b" style="left:2147.00px;top:138.50px;width:173.00px;height:41.00px;background:#474747;border:2px solid #6b6b6b;border-radius:5px;box-sizing:border-box;"></div>
<svg class="b" style="left:2290.00px;top:153.00px;" width="18" height="12" viewBox="0 0 18 12"><path d="M2 2 L9 9 L16 2" fill="none" stroke="#e0e0e0" stroke-width="2.4"/></svg>
<div class="b" style="left:2331.00px;top:86.00px;width:2.00px;height:94.00px;background:#494949;"></div>
<svg class="b" style="left:2779.00px;top:115.00px;" width="24" height="32" viewBox="0 0 24 32"><path d="M15 0 L2 19 H11 L8 32 L22 12 H13 Z" fill="#c4c4c4"/></svg>
<div class="b" style="left:2822.00px;top:86.00px;width:2.00px;height:94.00px;background:#494949;"></div>
<svg class="b" style="left:2841.00px;top:95.00px;" width="22" height="22" viewBox="0 0 22 22"><g transform="translate(11 11)"><rect x="-2.6" y="-11" width="5.2" height="6" fill="#c4c4c4" transform="rotate(0)"/><rect x="-2.6" y="-11" width="5.2" height="6" fill="#c4c4c4" transform="rotate(45)"/><rect x="-2.6" y="-11" width="5.2" height="6" fill="#c4c4c4" transform="rotate(90)"/><rect x="-2.6" y="-11" width="5.2" height="6" fill="#c4c4c4" transform="rotate(135)"/><rect x="-2.6" y="-11" width="5.2" height="6" fill="#c4c4c4" transform="rotate(180)"/><rect x="-2.6" y="-11" width="5.2" height="6" fill="#c4c4c4" transform="rotate(225)"/><rect x="-2.6" y="-11" width="5.2" height="6" fill="#c4c4c4" transform="rotate(270)"/><rect x="-2.6" y="-11" width="5.2" height="6" fill="#c4c4c4" transform="rotate(315)"/><circle r="6" fill="none" stroke="#c4c4c4" stroke-width="4.4"/></g></svg>
<svg class="b" style="left:2840.00px;top:152.00px;" width="25" height="15" viewBox="0 0 25 15"><path d="M0 1.5 H25 M0 7.5 H25 M0 13.5 H25" stroke="#c4c4c4" stroke-width="2"/></svg>
<div class="b" style="left:2.00px;top:193.00px;width:2876.00px;height:1420.00px;background:#424242;"></div>
<div class="b" style="left:2.00px;top:193.00px;width:76.00px;height:23.00px;background:#424242;"></div>
<svg class="b" style="left:10.00px;top:198.00px;" width="18" height="14" viewBox="0 0 18 14"><path d="M2 2 L7 7 L2 12 M10 2 L15 7 L10 12" fill="none" stroke="#cfcfcf" stroke-width="1.6"/></svg>
<div class="b" style="left:2.00px;top:216.00px;width:76.00px;height:2.00px;background:#383838;"></div>
<div class="b" style="left:2.00px;top:218.00px;width:76.00px;height:1400.00px;background:#535353;"></div>
<div class="b" style="left:78.00px;top:193.00px;width:2.00px;height:1420.00px;background:#383838;"></div>
<div class="b" style="left:80.00px;top:193.00px;width:2.00px;height:1420.00px;background:#4a4a4a;"></div>
<div class="b" style="left:82.00px;top:193.00px;width:2.00px;height:1420.00px;background:#383838;"></div>
<div class="b" style="left:20.00px;top:224.00px;width:2.00px;height:8.00px;background:#3a3a3a;"></div>
<div class="b" style="left:24.10px;top:224.00px;width:2.00px;height:8.00px;background:#3a3a3a;"></div>
<div class="b" style="left:28.20px;top:224.00px;width:2.00px;height:8.00px;background:#3a3a3a;"></div>
<div class="b" style="left:32.30px;top:224.00px;width:2.00px;height:8.00px;background:#3a3a3a;"></div>
<div class="b" style="left:36.40px;top:224.00px;width:2.00px;height:8.00px;background:#3a3a3a;"></div>
<div class="b" style="left:40.50px;top:224.00px;width:2.00px;height:8.00px;background:#3a3a3a;"></div>
<div class="b" style="left:44.60px;top:224.00px;width:2.00px;height:8.00px;background:#3a3a3a;"></div>
<div class="b" style="left:48.70px;top:224.00px;width:2.00px;height:8.00px;background:#3a3a3a;"></div>
<div class="b" style="left:52.80px;top:224.00px;width:2.00px;height:8.00px;background:#3a3a3a;"></div>
<div class="b" style="left:56.90px;top:224.00px;width:2.00px;height:8.00px;background:#3a3a3a;"></div>
<div class="b" style="left:84.00px;top:194.00px;width:690.00px;height:57.00px;background:#535353;"></div>
<svg class="b" style="left:113.00px;top:215.00px;" width="14" height="14" viewBox="0 0 14 14"><path d="M1 1 L13 13 M13 1 L1 13" stroke="#e6e6e6" stroke-width="2.2"/></svg>
<div class="t" style="left:146.00px;top:213.49px;font:bold 19.50px/1 'Liberation Sans',sans-serif;color:#eeeeee;letter-spacing:0.728px;">*WEPB21_Suites_V1.indd @ 31% [GPU Preview] [Converted]</div>
<div class="b" style="left:84.00px;top:250.00px;width:2430.00px;height:2.00px;background:#3a3a3a;"></div>
<div class="b" style="left:116.00px;top:284.00px;width:2398.00px;height:1308.00px;background:#b9b9b9;"></div>
<div class="b" style="left:116px;top:1540px;width:2398px;height:52px;background:linear-gradient(#b9b9b900,#a4a4a4);"></div>
<div class="b" style="left:84.00px;top:252.00px;width:2430.00px;height:30.00px;background:#1e1e1e;"></div>
<div class="b" style="left:84.00px;top:282.00px;width:2430.00px;height:2.00px;background:#757575;"></div>
<div class="b" style="left:114.00px;top:252.00px;width:2.00px;height:32.00px;background:#8a8a8a;"></div>
<svg class="b" style="left:116.00px;top:252.00px;" width="2398" height="30" viewBox="0 0 2398 30"><rect x="-1.9" y="27" width="1.5" height="3" fill="#8c8c8c"/><rect x="9.3" y="27" width="1.5" height="3" fill="#8c8c8c"/><rect x="20.5" y="22" width="1.5" height="8" fill="#8c8c8c"/><rect x="31.7" y="27" width="1.5" height="3" fill="#8c8c8c"/><rect x="42.9" y="27" width="1.5" height="3" fill="#8c8c8c"/><rect x="54.1" y="27" width="1.5" height="3" fill="#8c8c8c"/><rect x="65.3" y="27" width="1.5" height="3" fill="#8c8c8c"/><rect x="76.5" y="0" width="2" height="30" fill="#8c8c8c"/><rect x="87.7" y="27" width="1.5" height="3" fill="#8c8c8c"/><rect x="98.9" y="27" width="1.5" height="3" fill="#8c8c8c"/><rect x="110.1" y="27" width="1.5" height="3" fill="#8c8c8c"/><rect x="121.3" y="27" width="1.5" height="3" fill="#8c8c8c"/><rect x="132.5" y="22" width="1.5" height="8" fill="#8c8c8c"/><rect x="143.7" y="27" width="1.5" height="3" fill="#8c8c8c"/><rect x="154.9" y="27" width="1.5" height="3" fill="#8c8c8c"/><rect x="166.1" y="27" width="1.5" height="3" fill="#8c8c8c"/><rect x="177.3" y="27" width="1.5" height="3" fill="#8c8c8c"/><rect x="188.5" y="0" width="2" height="30" fill="#8c8c8c"/><rect x="199.7" y="27" width="1.5" height="3" fill="#8c8c8c"/><rect x="210.9" y="27" width="1.5" height="3" fill="#8c8c8c"/><rect x="222.1" y="27" width="1.5" height="3" fill="#8c8c8c"/><rect x="233.3" y="27" width="1.5" height="3" fill="#8c8c8c"/><rect x="244.5" y="22" width="1.5" height="8" fill="#8c8c8c"/><rect x="255.7" y="27" width="1.5" height="3" fill="#8c8c8c"/><rect x="266.9" y="27" width="1.5" height="3" fill="#8c8c8c"/><rect x="278.1" y="27" width="1.5" height="3" fill="#8c8c8c"/><rect x="289.3" y="27" width="1.5" height="3" fill="#8c8c8c"/><rect x="300.5" y="0" width="2" height="30" fill="#8c8c8c"/><rect x="311.7" y="27" width="1.5" height="3" fill="#8c8c8c"/><rect x="322.9" y="27" width="1.5" height="3" fill="#8c8c8c"/><rect x="334.1" y="27" width="1.5" height="3" fill="#8c8c8c"/><rect x="345.3" y="27" width="1.5" height="3" fill="#8c8c8c"/><rect x="356.5" y="22" width="1.5" height="8" fill="#8c8c8c"/><rect x="367.7" y="27" width="1.5" height="3" fill="#8c8c8c"/><rect x="378.9" y="27" width="1.5" height="3" fill="#8c8c8c"/><rect x="390.1" y="27" width="1.5" height="3" fill="#8c8c8c"/><rect x="401.3" y="27" width="1.5" height="3" fill="#8c8c8c"/><rect x="412.5" y="0" width="2" height="30" fill="#8c8c8c"/><rect x="423.7" y="27" width="1.5" height="3" fill="#8c8c8c"/><rect x="434.9" y="27" width="1.5" height="3" fill="#8c8c8c"/><rect x="446.1" y="27" width="1.5" height="3" fill="#8c8c8c"/><rect x="457.3" y="27" width="1.5" height="3" fill="#8c8c8c"/><rect x="468.5" y="22" width="1.5" height="8" fill="#8c8c8c"/><rect x="479.7" y="27" width="1.5" height="3" fill="#8c8c8c"/><rect x="490.9" y="27" width="1.5" height="3" fill="#8c8c8c"/><rect x="502.1" y="27" width="1.5" height="3" fill="#8c8c8c"/><rect x="513.3" y="27" width="1.5" height="3" fill="#8c8c8c"/><rect x="524.5" y="0" width="2" height="30" fill="#8c8c8c"/><rect x="535.7" y="27" width="1.5" height="3" fill="#8c8c8c"/><rect x="546.9" y="27" width="1.5" height="3" fill="#8c8c8c"/><rect x="558.1" y="27" width="1.5" height="3" fill="#8c8c8c"/><rect x="569.3" y="27" width="1.5" height="3" fill="#8c8c8c"/><rect x="580.5" y="22" width="1.5" height="8" fill="#8c8c8c"/><rect x="591.7" y="27" width="1.5" height="3" fill="#8c8c8c"/><rect x="602.9" y="27" width="1.5" height="3" fill="#8c8c8c"/><rect x="614.1" y="27" width="1.5" height="3" fill="#8c8c8c"/><rect x="625.3" y="27" width="1.5" height="3" fill="#8c8c8c"/><rect x="636.5" y="0" width="2" height="30" fill="#8c8c8c"/><rect x="647.7" y="27" width="1.5" height="3" fill="#8c8c8c"/><rect x="658.9" y="27" width="1.5" height="3" fill="#8c8c8c"/><rect x="670.1" y="27" width="1.5" height="3" fill="#8c8c8c"/><rect x="681.3" y="27" width="1.5" height="3" fill="#8c8c8c"/><rect x="692.5" y="22" width="1.5" height="8" fill="#8c8c8c"/><rect x="703.7" y="27" width="1.5" height="3" fill="#8c8c8c"/><rect x="714.9" y="27" width="1.5" height="3" fill="#8c8c8c"/><rect x="726.1" y="27" width="1.5" height="3" fill="#8c8c8c"/><rect x="737.3" y="27" width="1.5" height="3" fill="#8c8c8c"/><rect x="748.5" y="0" width="2" height="30" fill="#8c8c8c"/><rect x="759.7" y="27" width="1.5" height="3" fill="#8c8c8c"/><rect x="770.9" y="27" width="1.5" height="3" fill="#8c8c8c"/><rect x="782.1" y="27" width="1.5" height="3" fill="#8c8c8c"/><rect x="793.3" y="27" width="1.5" height="3" fill="#8c8c8c"/><rect x="804.5" y="22" width="1.5" height="8" fill="#8c8c8c"/><rect x="815.7" y="27" width="1.5" height="3" fill="#8c8c8c"/><rect x="826.9" y="27" width="1.5" height="3" fill="#8c8c8c"/><rect x="838.1" y="27" width="1.5" height="3" fill="#8c8c8c"/><rect x="849.3" y="27" width="1.5" height="3" fill="#8c8c8c"/><rect x="860.5" y="0" width="2" height="30" fill="#8c8c8c"/><rect x="871.7" y="27" width="1.5" height="3" fill="#8c8c8c"/><rect x="882.9" y="27" width="1.5" height="3" fill="#8c8c8c"/><rect x="894.1" y="27" width="1.5" height="3" fill="#8c8c8c"/><rect x="905.3" y="27" width="1.5" height="3" fill="#8c8c8c"/><rect x="916.5" y="22" width="1.5" height="8" fill="#8c8c8c"/><rect x="927.7" y="27" width="1.5" height="3" fill="#8c8c8c"/><rect x="938.9" y="27" width="1.5" height="3" fill="#8c8c8c"/><rect x="950.1" y="27" width="1.5" height="3" fill="#8c8c8c"/><rect x="961.3" y="27" width="1.5" height="3" fill="#8c8c8c"/><rect x="972.5" y="0" width="2" height="30" fill="#8c8c8c"/><rect x="983.7" y="27" width="1.5" height="3" fill="#8c8c8c"/><rect x="994.9" y="27" width="1.5" height="3" fill="#8c8c8c"/><rect x="1006.1" y="27" width="1.5" height="3" fill="#8c8c8c"/><rect x="1017.3" y="27" width="1.5" height="3" fill="#8c8c8c"/><rect x="1028.5" y="22" width="1.5" height="8" fill="#8c8c8c"/><rect x="1039.7" y="27" width="1.5" height="3" fill="#8c8c8c"/><rect x="1050.9" y="27" width="1.5" height="3" fill="#8c8c8c"/><rect x="1062.1" y="27" width="1.5" height="3" fill="#8c8c8c"/><rect x="1073.3" y="27" width="1.5" height="3" fill="#8c8c8c"/><rect x="1084.5" y="0" width="2" height="30" fill="#8c8c8c"/><rect x="1095.7" y="27" width="1.5" height="3" fill="#8c8c8c"/><rect x="1106.9" y="27" width="1.5" height="3" fill="#8c8c8c"/><rect x="1118.1" y="27" width="1.5" height="3" fill="#8c8c8c"/><rect x="1129.3" y="27" width="1.5" height="3" fill="#8c8c8c"/><rect x="1140.5" y="22" width="1.5" height="8" fill="#8c8c8c"/><rect x="1151.7" y="27" width="1.5" height="3" fill="#8c8c8c"/><rect x="1162.9" y="27" width="1.5" height="3" fill="#8c8c8c"/><rect x="1174.1" y="27" width="1.5" height="3" fill="#8c8c8c"/><rect x="1185.3" y="27" width="1.5" height="3" fill="#8c8c8c"/><rect x="1196.5" y="0" width="2" height="30" fill="#8c8c8c"/><rect x="1207.7" y="27" width="1.5" height="3" fill="#8c8c8c"/><rect x="1218.9" y="27" width="1.5" height="3" fill="#8c8c8c"/><rect x="1230.1" y="27" width="1.5" height="3" fill="#8c8c8c"/><rect x="1241.3" y="27" width="1.5" height="3" fill="#8c8c8c"/><rect x="1252.5" y="22" width="1.5" height="8" fill="#8c8c8c"/><rect x="1263.7" y="27" width="1.5" height="3" fill="#8c8c8c"/><rect x="1274.9" y="27" width="1.5" height="3" fill="#8c8c8c"/><rect x="1286.1" y="27" width="1.5" height="3" fill="#8c8c8c"/><rect x="1297.3" y="27" width="1.5" height="3" fill="#8c8c8c"/><rect x="1308.5" y="0" width="2" height="30" fill="#8c8c8c"/><rect x="1319.7" y="27" width="1.5" height="3" fill="#8c8c8c"/><rect x="1330.9" y="27" width="1.5" height="3" fill="#8c8c8c"/><rect x="1342.1" y="27" width="1.5" height="3" fill="#8c8c8c"/><rect x="1353.3" y="27" width="1.5" height="3" fill="#8c8c8c"/><rect x="1364.5" y="22" width="1.5" height="8" fill="#8c8c8c"/><rect x="1375.7" y="27" width="1.5" height="3" fill="#8c8c8c"/><rect x="1386.9" y="27" width="1.5" height="3" fill="#8c8c8c"/><rect x="1398.1" y="27" width="1.5" height="3" fill="#8c8c8c"/><rect x="1409.3" y="27" width="1.5" height="3" fill="#8c8c8c"/><rect x="1420.5" y="0" width="2" height="30" fill="#8c8c8c"/><rect x="1431.7" y="27" width="1.5" height="3" fill="#8c8c8c"/><rect x="1442.9" y="27" width="1.5" height="3" fill="#8c8c8c"/><rect x="1454.1" y="27" width="1.5" height="3" fill="#8c8c8c"/><rect x="1465.3" y="27" width="1.5" height="3" fill="#8c8c8c"/><rect x="1476.5" y="22" width="1.5" height="8" fill="#8c8c8c"/><rect x="1487.7" y="27" width="1.5" height="3" fill="#8c8c8c"/><rect x="1498.9" y="27" width="1.5" height="3" fill="#8c8c8c"/><rect x="1510.1" y="27" width="1.5" height="3" fill="#8c8c8c"/><rect x="1521.3" y="27" width="1.5" height="3" fill="#8c8c8c"/><rect x="1532.5" y="0" width="2" height="30" fill="#8c8c8c"/><rect x="1543.7" y="27" width="1.5" height="3" fill="#8c8c8c"/><rect x="1554.9" y="27" width="1.5" height="3" fill="#8c8c8c"/><rect x="1566.1" y="27" width="1.5" height="3" fill="#8c8c8c"/><rect x="1577.3" y="27" width="1.5" height="3" fill="#8c8c8c"/><rect x="1588.5" y="22" width="1.5" height="8" fill="#8c8c8c"/><rect x="1599.7" y="27" width="1.5" height="3" fill="#8c8c8c"/><rect x="1610.9" y="27" width="1.5" height="3" fill="#8c8c8c"/><rect x="1622.1" y="27" width="1.5" height="3" fill="#8c8c8c"/><rect x="1633.3" y="27" width="1.5" height="3" fill="#8c8c8c"/><rect x="1644.5" y="0" width="2" height="30" fill="#8c8c8c"/><rect x="1655.7" y="27" width="1.5" height="3" fill="#8c8c8c"/><rect x="1666.9" y="27" width="1.5" height="3" fill="#8c8c8c"/><rect x="1678.1" y="27" width="1.5" height="3" fill="#8c8c8c"/><rect x="1689.3" y="27" width="1.5" height="3" fill="#8c8c8c"/><rect x="1700.5" y="22" width="1.5" height="8" fill="#8c8c8c"/><rect x="1711.7" y="27" width="1.5" height="3" fill="#8c8c8c"/><rect x="1722.9" y="27" width="1.5" height="3" fill="#8c8c8c"/><rect x="1734.1" y="27" width="1.5" height="3" fill="#8c8c8c"/><rect x="1745.3" y="27" width="1.5" height="3" fill="#8c8c8c"/><rect x="1756.5" y="0" width="2" height="30" fill="#8c8c8c"/><rect x="1767.7" y="27" width="1.5" height="3" fill="#8c8c8c"/><rect x="1778.9" y="27" width="1.5" height="3" fill="#8c8c8c"/><rect x="1790.1" y="27" width="1.5" height="3" fill="#8c8c8c"/><rect x="1801.3" y="27" width="1.5" height="3" fill="#8c8c8c"/><rect x="1812.5" y="22" width="1.5" height="8" fill="#8c8c8c"/><rect x="1823.7" y="27" width="1.5" height="3" fill="#8c8c8c"/><rect x="1834.9" y="27" width="1.5" height="3" fill="#8c8c8c"/><rect x="1846.1" y="27" width="1.5" height="3" fill="#8c8c8c"/><rect x="1857.3" y="27" width="1.5" height="3" fill="#8c8c8c"/><rect x="1868.5" y="0" width="2" height="30" fill="#8c8c8c"/><rect x="1879.7" y="27" width="1.5" height="3" fill="#8c8c8c"/><rect x="1890.9" y="27" width="1.5" height="3" fill="#8c8c8c"/><rect x="1902.1" y="27" width="1.5" height="3" fill="#8c8c8c"/><rect x="1913.3" y="27" width="1.5" height="3" fill="#8c8c8c"/><rect x="1924.5" y="22" width="1.5" height="8" fill="#8c8c8c"/><rect x="1935.7" y="27" width="1.5" height="3" fill="#8c8c8c"/><rect x="1946.9" y="27" width="1.5" height="3" fill="#8c8c8c"/><rect x="1958.1" y="27" width="1.5" height="3" fill="#8c8c8c"/><rect x="1969.3" y="27" width="1.5" height="3" fill="#8c8c8c"/><rect x="1980.5" y="0" width="2" height="30" fill="#8c8c8c"/><rect x="1991.7" y="27" width="1.5" height="3" fill="#8c8c8c"/><rect x="2002.9" y="27" width="1.5" height="3" fill="#8c8c8c"/><rect x="2014.1" y="27" width="1.5" height="3" fill="#8c8c8c"/><rect x="2025.3" y="27" width="1.5" height="3" fill="#8c8c8c"/><rect x="2036.5" y="22" width="1.5" height="8" fill="#8c8c8c"/><rect x="2047.7" y="27" width="1.5" height="3" fill="#8c8c8c"/><rect x="2058.9" y="27" width="1.5" height="3" fill="#8c8c8c"/><rect x="2070.1" y="27" width="1.5" height="3" fill="#8c8c8c"/><rect x="2081.3" y="27" width="1.5" height="3" fill="#8c8c8c"/><rect x="2092.5" y="0" width="2" height="30" fill="#8c8c8c"/><rect x="2103.7" y="27" width="1.5" height="3" fill="#8c8c8c"/><rect x="2114.9" y="27" width="1.5" height="3" fill="#8c8c8c"/><rect x="2126.1" y="27" width="1.5" height="3" fill="#8c8c8c"/><rect x="2137.3" y="27" width="1.5" height="3" fill="#8c8c8c"/><rect x="2148.5" y="22" width="1.5" height="8" fill="#8c8c8c"/><rect x="2159.7" y="27" width="1.5" height="3" fill="#8c8c8c"/><rect x="2170.9" y="27" width="1.5" height="3" fill="#8c8c8c"/><rect x="2182.1" y="27" width="1.5" height="3" fill="#8c8c8c"/><rect x="2193.3" y="27" width="1.5" height="3" fill="#8c8c8c"/><rect x="2204.5" y="0" width="2" height="30" fill="#8c8c8c"/><rect x="2215.7" y="27" width="1.5" height="3" fill="#8c8c8c"/><rect x="2226.9" y="27" width="1.5" height="3" fill="#8c8c8c"/><rect x="2238.1" y="27" width="1.5" height="3" fill="#8c8c8c"/><rect x="2249.3" y="27" width="1.5" height="3" fill="#8c8c8c"/><rect x="2260.5" y="22" width="1.5" height="8" fill="#8c8c8c"/><rect x="2271.7" y="27" width="1.5" height="3" fill="#8c8c8c"/><rect x="2282.9" y="27" width="1.5" height="3" fill="#8c8c8c"/><rect x="2294.1" y="27" width="1.5" height="3" fill="#8c8c8c"/><rect x="2305.3" y="27" width="1.5" height="3" fill="#8c8c8c"/><rect x="2316.5" y="0" width="2" height="30" fill="#8c8c8c"/><rect x="2327.7" y="27" width="1.5" height="3" fill="#8c8c8c"/><rect x="2338.9" y="27" width="1.5" height="3" fill="#8c8c8c"/><rect x="2350.1" y="27" width="1.5" height="3" fill="#8c8c8c"/><rect x="2361.3" y="27" width="1.5" height="3" fill="#8c8c8c"/><rect x="2372.5" y="22" width="1.5" height="8" fill="#8c8c8c"/><rect x="2383.7" y="27" width="1.5" height="3" fill="#8c8c8c"/><rect x="2394.9" y="27" width="1.5" height="3" fill="#8c8c8c"/></svg>
<div class="b" style="left:116px;top:252px;width:2398px;height:30px;overflow:hidden;">
<div class="t" style="left:-29.00px;top:1.42px;font:21.00px/1 'Liberation Sans',sans-serif;color:#f4f4f4;-webkit-text-stroke:0.3px #f4f4f4;">800</div>
<div class="t" style="left:83.00px;top:1.42px;font:21.00px/1 'Liberation Sans',sans-serif;color:#f4f4f4;-webkit-text-stroke:0.3px #f4f4f4;">700</div>
<div class="t" style="left:195.00px;top:1.42px;font:21.00px/1 'Liberation Sans',sans-serif;color:#f4f4f4;-webkit-text-stroke:0.3px #f4f4f4;">600</div>
<div class="t" style="left:307.00px;top:1.42px;font:21.00px/1 'Liberation Sans',sans-serif;color:#f4f4f4;-webkit-text-stroke:0.3px #f4f4f4;">500</div>
<div class="t" style="left:419.00px;top:1.42px;font:21.00px/1 'Liberation Sans',sans-serif;color:#f4f4f4;-webkit-text-stroke:0.3px #f4f4f4;">400</div>
<div class="t" style="left:531.00px;top:1.42px;font:21.00px/1 'Liberation Sans',sans-serif;color:#f4f4f4;-webkit-text-stroke:0.3px #f4f4f4;">300</div>
<div class="t" style="left:643.00px;top:1.42px;font:21.00px/1 'Liberation Sans',sans-serif;color:#f4f4f4;-webkit-text-stroke:0.3px #f4f4f4;">200</div>
<div class="t" style="left:755.00px;top:1.42px;font:21.00px/1 'Liberation Sans',sans-serif;color:#f4f4f4;-webkit-text-stroke:0.3px #f4f4f4;">100</div>
<div class="t" style="left:867.00px;top:1.42px;font:21.00px/1 'Liberation Sans',sans-serif;color:#f4f4f4;-webkit-text-stroke:0.3px #f4f4f4;">0</div>
<div class="t" style="left:979.00px;top:1.42px;font:21.00px/1 'Liberation Sans',sans-serif;color:#f4f4f4;-webkit-text-stroke:0.3px #f4f4f4;">100</div>
<div class="t" style="left:1091.00px;top:1.42px;font:21.00px/1 'Liberation Sans',sans-serif;color:#f4f4f4;-webkit-text-stroke:0.3px #f4f4f4;">200</div>
<div class="t" style="left:1203.00px;top:1.42px;font:21.00px/1 'Liberation Sans',sans-serif;color:#f4f4f4;-webkit-text-stroke:0.3px #f4f4f4;">300</div>
<div class="t" style="left:1315.00px;top:1.42px;font:21.00px/1 'Liberation Sans',sans-serif;color:#f4f4f4;-webkit-text-stroke:0.3px #f4f4f4;">400</div>
<div class="t" style="left:1427.00px;top:1.42px;font:21.00px/1 'Liberation Sans',sans-serif;color:#f4f4f4;-webkit-text-stroke:0.3px #f4f4f4;">500</div>
<div class="t" style="left:1539.00px;top:1.42px;font:21.00px/1 'Liberation Sans',sans-serif;color:#f4f4f4;-webkit-text-stroke:0.3px #f4f4f4;">600</div>
<div class="t" style="left:1651.00px;top:1.42px;font:21.00px/1 'Liberation Sans',sans-serif;color:#f4f4f4;-webkit-text-stroke:0.3px #f4f4f4;">700</div>
<div class="t" style="left:1763.00px;top:1.42px;font:21.00px/1 'Liberation Sans',sans-serif;color:#f4f4f4;-webkit-text-stroke:0.3px #f4f4f4;">800</div>
<div class="t" style="left:1875.00px;top:1.42px;font:21.00px/1 'Liberation Sans',sans-serif;color:#f4f4f4;-webkit-text-stroke:0.3px #f4f4f4;">900</div>
<div class="t" style="left:1987.00px;top:1.42px;font:21.00px/1 'Liberation Sans',sans-serif;color:#f4f4f4;-webkit-text-stroke:0.3px #f4f4f4;">1000</div>
<div class="t" style="left:2099.00px;top:1.42px;font:21.00px/1 'Liberation Sans',sans-serif;color:#f4f4f4;-webkit-text-stroke:0.3px #f4f4f4;">1100</div>
<div class="t" style="left:2211.00px;top:1.42px;font:21.00px/1 'Liberation Sans',sans-serif;color:#f4f4f4;-webkit-text-stroke:0.3px #f4f4f4;">1200</div>
<div class="t" style="left:2323.00px;top:1.42px;font:21.00px/1 'Liberation Sans',sans-serif;color:#f4f4f4;-webkit-text-stroke:0.3px #f4f4f4;">1300</div>
</div>
<svg class="b" style="left:84.00px;top:252.00px;" width="30" height="30" viewBox="0 0 30 30"><path d="M0 8 H28 M8 0 V30" stroke="#d0d0d0" stroke-width="1.6" stroke-dasharray="2 2.5"/></svg>
<svg class="b" style="left:441.00px;top:254.00px;" width="2" height="28" viewBox="0 0 2 28"><path d="M1 0 V28" stroke="#ffffff" stroke-width="1.4" stroke-dasharray="2 2"/></svg>
<div class="b" style="left:84.00px;top:284.00px;width:32.00px;height:1306.00px;background:#1e1e1e;"></div>
<div class="b" style="left:84.00px;top:284.00px;width:32.00px;height:27.00px;background:#5b5b5b;"></div>
<svg class="b" style="left:84.00px;top:284.00px;" width="32" height="1308" viewBox="0 0 32 1308"><rect x="27.5" y="29.0" width="4.5" height="1.3" fill="#858585"/><rect x="27.5" y="40.2" width="4.5" height="1.3" fill="#858585"/><rect x="22.5" y="51.4" width="9.5" height="1.3" fill="#858585"/><rect x="27.5" y="62.5" width="4.5" height="1.3" fill="#858585"/><rect x="27.5" y="73.7" width="4.5" height="1.3" fill="#858585"/><rect x="27.5" y="85.0" width="4.5" height="1.3" fill="#858585"/><rect x="27.5" y="96.2" width="4.5" height="1.3" fill="#858585"/><rect x="0" y="107.3" width="32" height="1.3" fill="#9a9a9a"/><rect x="27.5" y="118.5" width="4.5" height="1.3" fill="#858585"/><rect x="27.5" y="129.7" width="4.5" height="1.3" fill="#858585"/><rect x="27.5" y="141.0" width="4.5" height="1.3" fill="#858585"/><rect x="27.5" y="152.2" width="4.5" height="1.3" fill="#858585"/><rect x="22.5" y="163.3" width="9.5" height="1.3" fill="#858585"/><rect x="27.5" y="174.5" width="4.5" height="1.3" fill="#858585"/><rect x="27.5" y="185.7" width="4.5" height="1.3" fill="#858585"/><rect x="27.5" y="197.0" width="4.5" height="1.3" fill="#858585"/><rect x="27.5" y="208.2" width="4.5" height="1.3" fill="#858585"/><rect x="0" y="219.3" width="32" height="1.3" fill="#9a9a9a"/><rect x="27.5" y="230.6" width="4.5" height="1.3" fill="#858585"/><rect x="27.5" y="241.7" width="4.5" height="1.3" fill="#858585"/><rect x="27.5" y="253.0" width="4.5" height="1.3" fill="#858585"/><rect x="27.5" y="264.1" width="4.5" height="1.3" fill="#858585"/><rect x="22.5" y="275.4" width="9.5" height="1.3" fill="#858585"/><rect x="27.5" y="286.6" width="4.5" height="1.3" fill="#858585"/><rect x="27.5" y="297.8" width="4.5" height="1.3" fill="#858585"/><rect x="27.5" y="309.0" width="4.5" height="1.3" fill="#858585"/><rect x="27.5" y="320.1" width="4.5" height="1.3" fill="#858585"/><rect x="0" y="331.4" width="32" height="1.3" fill="#9a9a9a"/><rect x="27.5" y="342.6" width="4.5" height="1.3" fill="#858585"/><rect x="27.5" y="353.8" width="4.5" height="1.3" fill="#858585"/><rect x="27.5" y="364.9" width="4.5" height="1.3" fill="#858585"/><rect x="27.5" y="376.1" width="4.5" height="1.3" fill="#858585"/><rect x="22.5" y="387.4" width="9.5" height="1.3" fill="#858585"/><rect x="27.5" y="398.6" width="4.5" height="1.3" fill="#858585"/><rect x="27.5" y="409.8" width="4.5" height="1.3" fill="#858585"/><rect x="27.5" y="420.9" width="4.5" height="1.3" fill="#858585"/><rect x="27.5" y="432.1" width="4.5" height="1.3" fill="#858585"/><rect x="0" y="443.4" width="32" height="1.3" fill="#9a9a9a"/><rect x="27.5" y="454.6" width="4.5" height="1.3" fill="#858585"/><rect x="27.5" y="465.8" width="4.5" height="1.3" fill="#858585"/><rect x="27.5" y="476.9" width="4.5" height="1.3" fill="#858585"/><rect x="27.5" y="488.1" width="4.5" height="1.3" fill="#858585"/><rect x="22.5" y="499.4" width="9.5" height="1.3" fill="#858585"/><rect x="27.5" y="510.6" width="4.5" height="1.3" fill="#858585"/><rect x="27.5" y="521.8" width="4.5" height="1.3" fill="#858585"/><rect x="27.5" y="532.9" width="4.5" height="1.3" fill="#858585"/><rect x="27.5" y="544.1" width="4.5" height="1.3" fill="#858585"/><rect x="0" y="555.4" width="32" height="1.3" fill="#9a9a9a"/><rect x="27.5" y="566.6" width="4.5" height="1.3" fill="#858585"/><rect x="27.5" y="577.8" width="4.5" height="1.3" fill="#858585"/><rect x="27.5" y="588.9" width="4.5" height="1.3" fill="#858585"/><rect x="27.5" y="600.1" width="4.5" height="1.3" fill="#858585"/><rect x="22.5" y="611.4" width="9.5" height="1.3" fill="#858585"/><rect x="27.5" y="622.5" width="4.5" height="1.3" fill="#858585"/><rect x="27.5" y="633.8" width="4.5" height="1.3" fill="#858585"/><rect x="27.5" y="644.9" width="4.5" height="1.3" fill="#858585"/><rect x="27.5" y="656.1" width="4.5" height="1.3" fill="#858585"/><rect x="0" y="667.4" width="32" height="1.3" fill="#9a9a9a"/><rect x="27.5" y="678.5" width="4.5" height="1.3" fill="#858585"/><rect x="27.5" y="689.8" width="4.5" height="1.3" fill="#858585"/><rect x="27.5" y="700.9" width="4.5" height="1.3" fill="#858585"/><rect x="27.5" y="712.1" width="4.5" height="1.3" fill="#858585"/><rect x="22.5" y="723.4" width="9.5" height="1.3" fill="#858585"/><rect x="27.5" y="734.5" width="4.5" height="1.3" fill="#858585"/><rect x="27.5" y="745.8" width="4.5" height="1.3" fill="#858585"/><rect x="27.5" y="756.9" width="4.5" height="1.3" fill="#858585"/><rect x="27.5" y="768.1" width="4.5" height="1.3" fill="#858585"/><rect x="0" y="779.4" width="32" height="1.3" fill="#9a9a9a"/><rect x="27.5" y="790.5" width="4.5" height="1.3" fill="#858585"/><rect x="27.5" y="801.8" width="4.5" height="1.3" fill="#858585"/><rect x="27.5" y="812.9" width="4.5" height="1.3" fill="#858585"/><rect x="27.5" y="824.1" width="4.5" height="1.3" fill="#858585"/><rect x="22.5" y="835.4" width="9.5" height="1.3" fill="#858585"/><rect x="27.5" y="846.5" width="4.5" height="1.3" fill="#858585"/><rect x="27.5" y="857.8" width="4.5" height="1.3" fill="#858585"/><rect x="27.5" y="868.9" width="4.5" height="1.3" fill="#858585"/><rect x="27.5" y="880.1" width="4.5" height="1.3" fill="#858585"/><rect x="0" y="891.4" width="32" height="1.3" fill="#9a9a9a"/><rect x="27.5" y="902.5" width="4.5" height="1.3" fill="#858585"/><rect x="27.5" y="913.8" width="4.5" height="1.3" fill="#858585"/><rect x="27.5" y="924.9" width="4.5" height="1.3" fill="#858585"/><rect x="27.5" y="936.1" width="4.5" height="1.3" fill="#858585"/><rect x="22.5" y="947.4" width="9.5" height="1.3" fill="#858585"/><rect x="27.5" y="958.5" width="4.5" height="1.3" fill="#858585"/><rect x="27.5" y="969.8" width="4.5" height="1.3" fill="#858585"/><rect x="27.5" y="980.9" width="4.5" height="1.3" fill="#858585"/><rect x="27.5" y="992.1" width="4.5" height="1.3" fill="#858585"/><rect x="0" y="1003.4" width="32" height="1.3" fill="#9a9a9a"/><rect x="27.5" y="1014.5" width="4.5" height="1.3" fill="#858585"/><rect x="27.5" y="1025.8" width="4.5" height="1.3" fill="#858585"/><rect x="27.5" y="1036.9" width="4.5" height="1.3" fill="#858585"/><rect x="27.5" y="1048.1" width="4.5" height="1.3" fill="#858585"/><rect x="22.5" y="1059.3" width="9.5" height="1.3" fill="#858585"/><rect x="27.5" y="1070.5" width="4.5" height="1.3" fill="#858585"/><rect x="27.5" y="1081.8" width="4.5" height="1.3" fill="#858585"/><rect x="27.5" y="1092.9" width="4.5" height="1.3" fill="#858585"/><rect x="27.5" y="1104.1" width="4.5" height="1.3" fill="#858585"/><rect x="0" y="1115.3" width="32" height="1.3" fill="#9a9a9a"/><rect x="27.5" y="1126.5" width="4.5" height="1.3" fill="#858585"/><rect x="27.5" y="1137.7" width="4.5" height="1.3" fill="#858585"/><rect x="27.5" y="1148.9" width="4.5" height="1.3" fill="#858585"/><rect x="27.5" y="1160.1" width="4.5" height="1.3" fill="#858585"/><rect x="22.5" y="1171.3" width="9.5" height="1.3" fill="#858585"/><rect x="27.5" y="1182.5" width="4.5" height="1.3" fill="#858585"/><rect x="27.5" y="1193.7" width="4.5" height="1.3" fill="#858585"/><rect x="27.5" y="1204.9" width="4.5" height="1.3" fill="#858585"/><rect x="27.5" y="1216.1" width="4.5" height="1.3" fill="#858585"/><rect x="0" y="1227.3" width="32" height="1.3" fill="#9a9a9a"/><rect x="27.5" y="1238.5" width="4.5" height="1.3" fill="#858585"/><rect x="27.5" y="1249.7" width="4.5" height="1.3" fill="#858585"/><rect x="27.5" y="1260.9" width="4.5" height="1.3" fill="#858585"/><rect x="27.5" y="1272.1" width="4.5" height="1.3" fill="#858585"/><rect x="22.5" y="1283.3" width="9.5" height="1.3" fill="#858585"/><rect x="27.5" y="1294.5" width="4.5" height="1.3" fill="#858585"/><rect x="0" y="26.2" width="32" height="1.6" fill="#8c8c8c"/></svg>
<div class="b" style="left:84px;top:284px;width:30px;height:1308px;overflow:hidden;">
<div class="t" style="left:4.30px;top:16.82px;font:21.00px/1 'Liberation Sans',sans-serif;color:#f4f4f4;-webkit-text-stroke:0.3px #f4f4f4;">0</div>
<div class="t" style="left:4.30px;top:35.42px;font:21.00px/1 'Liberation Sans',sans-serif;color:#f4f4f4;-webkit-text-stroke:0.3px #f4f4f4;">0</div>
<div class="t" style="left:4.30px;top:110.22px;font:21.00px/1 'Liberation Sans',sans-serif;color:#f4f4f4;-webkit-text-stroke:0.3px #f4f4f4;">0</div>
<div class="t" style="left:4.30px;top:222.22px;font:21.00px/1 'Liberation Sans',sans-serif;color:#f4f4f4;-webkit-text-stroke:0.3px #f4f4f4;">1</div>
<div class="t" style="left:4.30px;top:240.82px;font:21.00px/1 'Liberation Sans',sans-serif;color:#f4f4f4;-webkit-text-stroke:0.3px #f4f4f4;">0</div>
<div class="t" style="left:4.30px;top:259.42px;font:21.00px/1 'Liberation Sans',sans-serif;color:#f4f4f4;-webkit-text-stroke:0.3px #f4f4f4;">0</div>
<div class="t" style="left:4.30px;top:334.22px;font:21.00px/1 'Liberation Sans',sans-serif;color:#f4f4f4;-webkit-text-stroke:0.3px #f4f4f4;">2</div>
<div class="t" style="left:4.30px;top:352.82px;font:21.00px/1 'Liberation Sans',sans-serif;color:#f4f4f4;-webkit-text-stroke:0.3px #f4f4f4;">0</div>
<div class="t" style="left:4.30px;top:371.42px;font:21.00px/1 'Liberation Sans',sans-serif;color:#f4f4f4;-webkit-text-stroke:0.3px #f4f4f4;">0</div>
<div class="t" style="left:4.30px;top:446.22px;font:21.00px/1 'Liberation Sans',sans-serif;color:#f4f4f4;-webkit-text-stroke:0.3px #f4f4f4;">3</div>
<div class="t" style="left:4.30px;top:464.82px;font:21.00px/1 'Liberation Sans',sans-serif;color:#f4f4f4;-webkit-text-stroke:0.3px #f4f4f4;">0</div>
<div class="t" style="left:4.30px;top:483.42px;font:21.00px/1 'Liberation Sans',sans-serif;color:#f4f4f4;-webkit-text-stroke:0.3px #f4f4f4;">0</div>
<div class="t" style="left:4.30px;top:558.22px;font:21.00px/1 'Liberation Sans',sans-serif;color:#f4f4f4;-webkit-text-stroke:0.3px #f4f4f4;">4</div>
<div class="t" style="left:4.30px;top:576.82px;font:21.00px/1 'Liberation Sans',sans-serif;color:#f4f4f4;-webkit-text-stroke:0.3px #f4f4f4;">0</div>
<div class="t" style="left:4.30px;top:595.42px;font:21.00px/1 'Liberation Sans',sans-serif;color:#f4f4f4;-webkit-text-stroke:0.3px #f4f4f4;">0</div>
<div class="t" style="left:4.30px;top:670.22px;font:21.00px/1 'Liberation Sans',sans-serif;color:#f4f4f4;-webkit-text-stroke:0.3px #f4f4f4;">5</div>
<div class="t" style="left:4.30px;top:688.82px;font:21.00px/1 'Liberation Sans',sans-serif;color:#f4f4f4;-webkit-text-stroke:0.3px #f4f4f4;">0</div>
<div class="t" style="left:4.30px;top:707.42px;font:21.00px/1 'Liberation Sans',sans-serif;color:#f4f4f4;-webkit-text-stroke:0.3px #f4f4f4;">0</div>
<div class="t" style="left:4.30px;top:782.22px;font:21.00px/1 'Liberation Sans',sans-serif;color:#f4f4f4;-webkit-text-stroke:0.3px #f4f4f4;">6</div>
<div class="t" style="left:4.30px;top:800.82px;font:21.00px/1 'Liberation Sans',sans-serif;color:#f4f4f4;-webkit-text-stroke:0.3px #f4f4f4;">0</div>
<div class="t" style="left:4.30px;top:819.42px;font:21.00px/1 'Liberation Sans',sans-serif;color:#f4f4f4;-webkit-text-stroke:0.3px #f4f4f4;">0</div>
<div class="t" style="left:4.30px;top:894.22px;font:21.00px/1 'Liberation Sans',sans-serif;color:#f4f4f4;-webkit-text-stroke:0.3px #f4f4f4;">7</div>
<div class="t" style="left:4.30px;top:912.82px;font:21.00px/1 'Liberation Sans',sans-serif;color:#f4f4f4;-webkit-text-stroke:0.3px #f4f4f4;">0</div>
<div class="t" style="left:4.30px;top:931.42px;font:21.00px/1 'Liberation Sans',sans-serif;color:#f4f4f4;-webkit-text-stroke:0.3px #f4f4f4;">0</div>
<div class="t" style="left:4.30px;top:1006.22px;font:21.00px/1 'Liberation Sans',sans-serif;color:#f4f4f4;-webkit-text-stroke:0.3px #f4f4f4;">8</div>
<div class="t" style="left:4.30px;top:1024.82px;font:21.00px/1 'Liberation Sans',sans-serif;color:#f4f4f4;-webkit-text-stroke:0.3px #f4f4f4;">0</div>
<div class="t" style="left:4.30px;top:1043.42px;font:21.00px/1 'Liberation Sans',sans-serif;color:#f4f4f4;-webkit-text-stroke:0.3px #f4f4f4;">0</div>
<div class="t" style="left:4.30px;top:1118.22px;font:21.00px/1 'Liberation Sans',sans-serif;color:#f4f4f4;-webkit-text-stroke:0.3px #f4f4f4;">9</div>
<div class="t" style="left:4.30px;top:1136.82px;font:21.00px/1 'Liberation Sans',sans-serif;color:#f4f4f4;-webkit-text-stroke:0.3px #f4f4f4;">0</div>
<div class="t" style="left:4.30px;top:1155.42px;font:21.00px/1 'Liberation Sans',sans-serif;color:#f4f4f4;-webkit-text-stroke:0.3px #f4f4f4;">0</div>
<div class="t" style="left:4.30px;top:1230.22px;font:21.00px/1 'Liberation Sans',sans-serif;color:#f4f4f4;-webkit-text-stroke:0.3px #f4f4f4;">1</div>
<div class="t" style="left:4.30px;top:1248.82px;font:21.00px/1 'Liberation Sans',sans-serif;color:#f4f4f4;-webkit-text-stroke:0.3px #f4f4f4;">0</div>
<div class="t" style="left:4.30px;top:1267.42px;font:21.00px/1 'Liberation Sans',sans-serif;color:#f4f4f4;-webkit-text-stroke:0.3px #f4f4f4;">0</div>
<div class="t" style="left:4.30px;top:1286.02px;font:21.00px/1 'Liberation Sans',sans-serif;color:#f4f4f4;-webkit-text-stroke:0.3px #f4f4f4;">0</div>
</div>
<svg class="b" style="left:86.00px;top:533.00px;" width="28" height="3" viewBox="0 0 28 3"><path d="M0 1.5 H28" stroke="#ffffff" stroke-width="1.6" stroke-dasharray="2 2"/></svg>
<div class="b" style="left:2514.00px;top:252.00px;width:31.00px;height:1340.00px;background:#484848;"></div>
<div class="b" style="left:2516.00px;top:267.00px;width:28.00px;height:442.00px;background:#6b6b6b;border-radius:14px;"></div>
<div class="b" style="left:2545.00px;top:193.00px;width:4.00px;height:1420.00px;background:#383838;"></div>
<div class="b" style="left:12.00px;top:248.00px;width:56.00px;height:44.00px;background:#2e2e2e;border-radius:6px;"></div>
<svg class="b" style="left:20.00px;top:250.00px;" width="40" height="40" viewBox="0 0 40 40"><path d="M11 4 V35 L19 27.5 H32.5 Z" fill="none" stroke="#c4c4c4" stroke-width="2.4" stroke-linejoin="miter"/></svg>
<svg class="b" style="left:20.00px;top:299.00px;" width="40" height="40" viewBox="0 0 40 40"><path d="M10 3 V37 L19 28 H34 Z" fill="#c4c4c4"/></svg>
<svg class="b" style="left:20.00px;top:344.00px;" width="40" height="40" viewBox="0 0 40 40"><path d="M9 6 H21 L29 14 V20 M21 6 V14 H29 M9 6 V34 H21" fill="none" stroke="#c4c4c4" stroke-width="2.4"/><path d="M26 19 V37 L31 32 H38 Z" fill="#c4c4c4"/></svg>
<svg class="b" style="left:20.00px;top:393.00px;" width="40" height="40" viewBox="0 0 40 40"><path d="M4 6 V34 M36 6 V34" stroke="#c4c4c4" stroke-width="3.4"/><path d="M12 20 H28" stroke="#c4c4c4" stroke-width="2.6"/><path d="M8 20 L16 14 V26 Z M32 20 L24 14 V26 Z" fill="#c4c4c4"/></svg>
<svg class="b" style="left:20.00px;top:441.00px;" width="40" height="40" viewBox="0 0 40 40"><path d="M8 18 V34 H32 V18" fill="none" stroke="#c4c4c4" stroke-width="3.4"/><path d="M13 22 h4 v4 h-4 z M19 22 h4 v4 h-4 z M25 22 h4 v4 h-4 z M13 28 h4 v-3 h-4 z M19 28 h4 v-3 h-4 z M25 28 h4 v-3 h-4 z" fill="#c4c4c4"/><path d="M11 4 L20 13" stroke="#c4c4c4" stroke-width="3"/><path d="M22 6 V15 H13 Z" fill="#c4c4c4"/></svg><svg class="b" style="left:58.00px;top:472.00px;" width="8" height="8" viewBox="0 0 8 8"><path d="M8 0 V8 H0 Z" fill="#c4c4c4"/></svg>
<div class="b" style="left:4.00px;top:488.00px;width:72.00px;height:1.60px;background:#484848;"></div>
<div class="t" style="left:25.66px;top:493.99px;font:bold 43.00px/1 'Liberation Serif',serif;color:#c4c4c4;">T</div>
<svg class="b" style="left:58.00px;top:527.00px;" width="8" height="8" viewBox="0 0 8 8"><path d="M8 0 V8 H0 Z" fill="#c4c4c4"/></svg>
<svg class="b" style="left:20.00px;top:544.00px;" width="40" height="40" viewBox="0 0 40 40"><path d="M6 33 L34 7" stroke="#c4c4c4" stroke-width="2.8"/></svg>
<svg class="b" style="left:20.00px;top:592.00px;" width="40" height="40" viewBox="0 0 40 40"><path d="M4 33 L8 17 L22 10 L31 19 L24 32 Z" fill="#c4c4c4"/><path d="M5 32 L17 21" stroke="#535353" stroke-width="1.8"/><circle cx="18" cy="20" r="2.4" fill="#535353"/><path d="M24.5 8 L30 3 L38 11 L33 16.5 Z" fill="#c4c4c4"/></svg><svg class="b" style="left:58.00px;top:623.00px;" width="8" height="8" viewBox="0 0 8 8"><path d="M8 0 V8 H0 Z" fill="#c4c4c4"/></svg>
<svg class="b" style="left:20.00px;top:640.00px;" width="40" height="40" viewBox="0 0 40 40"><path d="M4 35 L7.5 23 L16 31.5 Z M9.5 21 L24 6.5 L32.5 15 L18 29.5 Z M25.5 5 L28.5 2 Q30 1 31.5 2 L37 7.5 Q38 9 37 10.5 L34 13.5 Z" fill="#c4c4c4"/><path d="M7 30 L9.5 32.5" stroke="#535353" stroke-width="2"/></svg><svg class="b" style="left:58.00px;top:671.00px;" width="8" height="8" viewBox="0 0 8 8"><path d="M8 0 V8 H0 Z" fill="#c4c4c4"/></svg>
<svg class="b" style="left:20.00px;top:688.00px;" width="40" height="40" viewBox="0 0 40 40"><rect x="5" y="7" width="30" height="26" fill="none" stroke="#c4c4c4" stroke-width="2.4"/><path d="M5 7 L35 33 M35 7 L5 33" stroke="#c4c4c4" stroke-width="2"/></svg><svg class="b" style="left:58.00px;top:719.00px;" width="8" height="8" viewBox="0 0 8 8"><path d="M8 0 V8 H0 Z" fill="#c4c4c4"/></svg>
<svg class="b" style="left:20.00px;top:736.00px;" width="40" height="40" viewBox="0 0 40 40"><rect x="5" y="7" width="30" height="26" fill="#6f6f6f" stroke="#c4c4c4" stroke-width="2.4"/></svg><svg class="b" style="left:58.00px;top:767.00px;" width="8" height="8" viewBox="0 0 8 8"><path d="M8 0 V8 H0 Z" fill="#c4c4c4"/></svg>
<div class="b" style="left:4.00px;top:781.00px;width:72.00px;height:1.60px;background:#484848;"></div>
<svg class="b" style="left:20.00px;top:790.00px;" width="40" height="40" viewBox="0 0 40 40"><path d="M3 10.5 L4.5 7.5 L30.5 22 L28.5 25.5 Z M3 26.5 L4.5 29.5 L30.5 15 L28.5 11.5 Z" fill="#c4c4c4"/><g fill="none" stroke="#c4c4c4" stroke-width="2.6"><circle cx="32.5" cy="10" r="4.4"/><circle cx="32.5" cy="27" r="4.4"/></g></svg>
<svg class="b" style="left:20.00px;top:837.00px;" width="40" height="40" viewBox="0 0 40 40"><path d="M2 4 V28 L8.5 22 H18 Z" fill="#c4c4c4"/><rect x="14" y="10" width="22" height="22" fill="none" stroke="#c4c4c4" stroke-width="2" stroke-dasharray="5 2.5"/><path d="M11 7 h6 v6 h-6z M33 7 h6 v6 h-6z M33 29 h6 v6 h-6z M11 29 h6 v6 h-6z" fill="#c4c4c4"/></svg><svg class="b" style="left:58.00px;top:868.00px;" width="8" height="8" viewBox="0 0 8 8"><path d="M8 0 V8 H0 Z" fill="#c4c4c4"/></svg>
<svg class="b" style="left:20.00px;top:885.00px;" width="40" height="40" viewBox="0 0 40 40"><defs><linearGradient id="tg" x1="0" x2="1"><stop offset="0" stop-color="#2a2a2a"/><stop offset="1" stop-color="#d6d6d6"/></linearGradient></defs><rect x="5" y="7" width="30" height="26" fill="url(#tg)" stroke="#c4c4c4" stroke-width="2"/></svg>
<svg class="b" style="left:20.00px;top:933.00px;" width="40" height="40" viewBox="0 0 40 40"><rect x="5" y="7" width="30" height="26" fill="#4a4a4a" stroke="#c4c4c4" stroke-width="2"/><rect x="5" y="7" width="5" height="5.2" fill="#9a9a9a" opacity="1.00"/><rect x="15" y="7" width="5" height="5.2" fill="#9a9a9a" opacity="1.00"/><rect x="25" y="7" width="5" height="5.2" fill="#9a9a9a" opacity="1.00"/><rect x="10" y="12.2" width="5" height="5.2" fill="#9a9a9a" opacity="0.80"/><rect x="20" y="12.2" width="5" height="5.2" fill="#9a9a9a" opacity="0.80"/><rect x="30" y="12.2" width="5" height="5.2" fill="#9a9a9a" opacity="0.80"/><rect x="5" y="17.4" width="5" height="5.2" fill="#9a9a9a" opacity="0.60"/><rect x="15" y="17.4" width="5" height="5.2" fill="#9a9a9a" opacity="0.60"/><rect x="25" y="17.4" width="5" height="5.2" fill="#9a9a9a" opacity="0.60"/><rect x="10" y="22.6" width="5" height="5.2" fill="#9a9a9a" opacity="0.40"/><rect x="20" y="22.6" width="5" height="5.2" fill="#9a9a9a" opacity="0.40"/><rect x="30" y="22.6" width="5" height="5.2" fill="#9a9a9a" opacity="0.40"/><rect x="5" y="27.8" width="5" height="5.2" fill="#9a9a9a" opacity="0.20"/><rect x="15" y="27.8" width="5" height="5.2" fill="#9a9a9a" opacity="0.20"/><rect x="25" y="27.8" width="5" height="5.2" fill="#9a9a9a" opacity="0.20"/></svg>
<div class="b" style="left:4.00px;top:980.00px;width:72.00px;height:1.60px;background:#484848;"></div>
<svg class="b" style="left:20.00px;top:988.00px;" width="40" height="40" viewBox="0 0 40 40"><path d="M6 6 H34 V25 L25 34 H6 Z" fill="#c4c4c4"/><path d="M11 14 H29 M11 20 H29 M11 26 H21" stroke="#535353" stroke-width="2.4"/><path d="M26 34 V26 H34 Z" fill="#c4c4c4" stroke="#535353" stroke-width="1.5"/></svg>
<svg class="b" style="left:20.00px;top:1037.00px;" width="40" height="40" viewBox="0 0 40 40"><path d="M5 34 Q3 30 7 27 L19 15 L23 19 L11 31 Q8 34 5 34 Z" fill="none" stroke="#c4c4c4" stroke-width="2.2"/><path d="M17 11 L21 7 L24 10 Q24 4 28 2.5 Q32 2 33.5 5.5 Q34 9 28 12 L31 15 L27 19 Z" fill="#c4c4c4"/><rect x="21" y="27" width="17" height="8" fill="#c4c4c4"/><path d="M24 29 h3 v4 h-3z M29 29 h3 v4 h-3z M34 29 h2 v4 h-2z" fill="#535353"/></svg><svg class="b" style="left:58.00px;top:1068.00px;" width="8" height="8" viewBox="0 0 8 8"><path d="M8 0 V8 H0 Z" fill="#c4c4c4"/></svg>
<svg class="b" style="left:20.00px;top:1084.00px;" width="40" height="40" viewBox="0 0 40 40"><g stroke="#c4c4c4" stroke-linecap="round" fill="none"><path d="M13.5 23 L9 10.5 M18 21 L16.5 5.5 M23 21 L24.5 6 M27.5 23.5 L32 11" stroke-width="4.4"/><path d="M13 29 L5 21.5" stroke-width="4.6"/></g><path d="M11 22 L29.5 22 C30 28 28 33 25.5 37 H15.5 C12.5 33 11 28 11 22 Z" fill="#c4c4c4"/></svg>
<svg class="b" style="left:20.00px;top:1132.00px;" width="40" height="40" viewBox="0 0 40 40"><circle cx="16" cy="16" r="10.5" fill="none" stroke="#c4c4c4" stroke-width="2.6"/><path d="M24 24 L35 35" stroke="#c4c4c4" stroke-width="4" stroke-linecap="round"/></svg>
<div class="b" style="left:4.00px;top:1178.00px;width:72.00px;height:1.60px;background:#484848;"></div>
<svg class="b" style="left:10.00px;top:1186.00px;" width="26" height="24" viewBox="0 0 26 24"><rect x="9" y="8" width="14" height="14" fill="#ffffff" stroke="#000" stroke-width="2.4"/><rect x="13" y="12" width="6" height="6" fill="#535353" stroke="#000" stroke-width="1.6"/><rect x="1.2" y="1.2" width="14" height="14" fill="#ffffff" stroke="#000" stroke-width="2.4"/><path d="M3 14 L14 3" stroke="#e03030" stroke-width="1.6"/></svg>
<svg class="b" style="left:46.00px;top:1188.00px;" width="26" height="26" viewBox="0 0 26 26"><path d="M4 12 Q12 2 18 12 V18" fill="none" stroke="#c4c4c4" stroke-width="3.4"/><path d="M0 13 L9 4 V13 Z M11 16 H25 L18 25 Z" fill="#c4c4c4"/></svg>
<div class="b" style="left:30.00px;top:1240.00px;width:39.00px;height:39.00px;background:#ffffff;"></div>
<svg class="b" style="left:30.00px;top:1240.00px;" width="39" height="39" viewBox="0 0 39 39"><rect x="11" y="11" width="17" height="17" fill="#535353"/><path d="M3 36 L36 3" stroke="#f21b1b" stroke-width="4.5"/></svg>
<div class="b" style="left:11.00px;top:1220.00px;width:39.00px;height:40.00px;background:#23282b;"></div>
<svg class="b" style="left:30.00px;top:1240.00px;" width="39" height="39" viewBox="0 0 39 39"><path d="M20 19.5 L36 3" stroke="#f21b1b" stroke-width="4.5"/></svg>
<div class="b" style="left:12.00px;top:1294.00px;width:28.00px;height:25.00px;background:#2e2e2e;border-radius:4px;"></div>
<svg class="b" style="left:18.00px;top:1298.00px;" width="16" height="16" viewBox="0 0 16 16"><rect x="1.2" y="1.2" width="13.6" height="13.6" fill="#8a8a8a" stroke="#c4c4c4" stroke-width="2"/></svg>
<div class="t" style="left:50.66px;top:1295.08px;font:bold 22.00px/1 'Liberation Serif',serif;color:#c4c4c4;">T</div>
<div class="b" style="left:12.00px;top:1332.00px;width:56.00px;height:44.00px;background:#2e2e2e;border-radius:5px;"></div>
<svg class="b" style="left:23.00px;top:1339.00px;" width="34" height="30" viewBox="0 0 34 30"><rect x="1.2" y="1.2" width="31" height="26" fill="#23282b" stroke="#c4c4c4" stroke-width="2"/></svg>
<svg class="b" style="left:58.00px;top:1366.00px;" width="7" height="7" viewBox="0 0 7 7"><path d="M7 0 V7 H0 Z" fill="#c4c4c4"/></svg>
<svg class="b" style="left:26.00px;top:1400.00px;" width="30" height="24" viewBox="0 0 30 24"><rect x="8" y="8" width="19" height="14" fill="#c4c4c4"/><path d="M9 2 V6 M15 2 V6 M21 2 V6 M27 2 V6 M1 9 H6 M1 15 H6 M1 21 H6" stroke="#c4c4c4" stroke-width="1.8"/></svg>
<div class="b" style="left:12.00px;top:1448.00px;width:56.00px;height:44.00px;background:#2e2e2e;border-radius:5px;"></div>
<svg class="b" style="left:29.00px;top:1458.00px;" width="24" height="24" viewBox="0 0 24 24"><rect x="1" y="1" width="22" height="22" fill="#7a7a7a" stroke="#c4c4c4" stroke-width="2"/><rect x="1" y="1" width="22" height="6" fill="#c4c4c4"/></svg>
<svg class="b" style="left:58.00px;top:1482.00px;" width="7" height="7" viewBox="0 0 7 7"><path d="M7 0 V7 H0 Z" fill="#c4c4c4"/></svg>
<div class="b" style="left:2549.00px;top:193.00px;width:2329.00px;height:1420.00px;background:#535353;"></div>
<div class="b" style="left:2549.00px;top:193.00px;width:329.00px;height:23.00px;background:#424242;"></div>
<div class="b" style="left:2549.00px;top:216.00px;width:329.00px;height:2.00px;background:#383838;"></div>
<svg class="b" style="left:2852.00px;top:200.00px;" width="16" height="12" viewBox="0 0 16 12"><path d="M6 1 L1.5 5.5 L6 10 M14 1 L9.5 5.5 L14 10" fill="none" stroke="#d8d8d8" stroke-width="1.6"/></svg>
<div class="b" style="left:2694.00px;top:224.00px;width:2.00px;height:8.00px;background:#3a3a3a;"></div><div class="b" style="left:2698.10px;top:224.00px;width:2.00px;height:8.00px;background:#3a3a3a;"></div><div class="b" style="left:2702.20px;top:224.00px;width:2.00px;height:8.00px;background:#3a3a3a;"></div><div class="b" style="left:2706.30px;top:224.00px;width:2.00px;height:8.00px;background:#3a3a3a;"></div><div class="b" style="left:2710.40px;top:224.00px;width:2.00px;height:8.00px;background:#3a3a3a;"></div><div class="b" style="left:2714.50px;top:224.00px;width:2.00px;height:8.00px;background:#3a3a3a;"></div><div class="b" style="left:2718.60px;top:224.00px;width:2.00px;height:8.00px;background:#3a3a3a;"></div><div class="b" style="left:2722.70px;top:224.00px;width:2.00px;height:8.00px;background:#3a3a3a;"></div><div class="b" style="left:2726.80px;top:224.00px;width:2.00px;height:8.00px;background:#3a3a3a;"></div><div class="b" style="left:2730.90px;top:224.00px;width:2.00px;height:8.00px;background:#3a3a3a;"></div>
<svg class="b" style="left:2569.00px;top:245.20px;" width="40" height="40" viewBox="0 0 40 40"><path d="M3 13 L11 5 H17 V31 H3 Z M23 5 H29 L37 13 V31 H23 Z" fill="#b9b9b9"/><path d="M3 13 L11 5 V13 Z M37 13 L29 5 V13 Z" fill="#a0a0a0"/><path d="M11 13 H3 M29 13 H37" stroke="#535353" stroke-width="1"/><path d="M20 0 V38" stroke="#b9b9b9" stroke-width="2"/></svg>
<div class="t" style="left:2624.50px;top:255.03px;font:bold 23.00px/1 'Liberation Sans',sans-serif;color:#f0f0f0;letter-spacing:-0.809px;">Pages</div>
<svg class="b" style="left:2569.00px;top:301.10px;" width="40" height="40" viewBox="0 0 40 40"><g fill="none" stroke="#b9b9b9" stroke-width="3.6"><rect x="2.8" y="12.8" width="21" height="14.4" rx="7.2"/><rect x="16.2" y="12.8" width="21" height="14.4" rx="7.2"/></g></svg>
<div class="t" style="left:2624.50px;top:310.93px;font:bold 23.00px/1 'Liberation Sans',sans-serif;color:#f0f0f0;letter-spacing:-0.233px;">Links</div>
<svg class="b" style="left:2569.00px;top:357.10px;" width="40" height="40" viewBox="0 0 40 40"><path d="M20 2 L37 11 L20 20.5 L3 11 Z" fill="#b9b9b9"/><path d="M3 21 L9 18 L20 24 L31 18 L37 21 L20 31 Z" fill="#b9b9b9"/></svg>
<div class="t" style="left:2624.50px;top:366.93px;font:bold 23.00px/1 'Liberation Sans',sans-serif;color:#f0f0f0;letter-spacing:-0.475px;">Layers</div>
<svg class="b" style="left:2569.00px;top:413.20px;" width="40" height="40" viewBox="0 0 40 40"><rect x="4" y="9" width="32" height="22" fill="#6a6a6a"/><rect x="5" y="10" width="10" height="10" fill="#7a7a7a"/><rect x="15" y="10" width="10" height="10" fill="#b0b0b0"/><rect x="25" y="10" width="10" height="10" fill="#4a4a4a"/><rect x="5" y="20" width="10" height="10" fill="#4a4a4a"/><rect x="15" y="20" width="10" height="10" fill="#8a8a8a"/><rect x="25" y="20" width="10" height="10" fill="#7a7a7a"/><path d="M5 10 H35 V30 H5 Z M15 10 V30 M25 10 V30 M5 20 H35" fill="none" stroke="#b9b9b9" stroke-width="2"/></svg>
<div class="t" style="left:2624.50px;top:423.03px;font:bold 23.00px/1 'Liberation Sans',sans-serif;color:#f0f0f0;letter-spacing:-0.521px;">Swatches</div>
<div class="b" style="left:2549.00px;top:466.30px;width:329.00px;height:2.40px;background:#383838;"></div>
<div class="b" style="left:2694.00px;top:474.20px;width:2.00px;height:8.00px;background:#3a3a3a;"></div><div class="b" style="left:2698.10px;top:474.20px;width:2.00px;height:8.00px;background:#3a3a3a;"></div><div class="b" style="left:2702.20px;top:474.20px;width:2.00px;height:8.00px;background:#3a3a3a;"></div><div class="b" style="left:2706.30px;top:474.20px;width:2.00px;height:8.00px;background:#3a3a3a;"></div><div class="b" style="left:2710.40px;top:474.20px;width:2.00px;height:8.00px;background:#3a3a3a;"></div><div class="b" style="left:2714.50px;top:474.20px;width:2.00px;height:8.00px;background:#3a3a3a;"></div><div class="b" style="left:2718.60px;top:474.20px;width:2.00px;height:8.00px;background:#3a3a3a;"></div><div class="b" style="left:2722.70px;top:474.20px;width:2.00px;height:8.00px;background:#3a3a3a;"></div><div class="b" style="left:2726.80px;top:474.20px;width:2.00px;height:8.00px;background:#3a3a3a;"></div><div class="b" style="left:2730.90px;top:474.20px;width:2.00px;height:8.00px;background:#3a3a3a;"></div>
<svg class="b" style="left:2569.00px;top:495.40px;" width="40" height="40" viewBox="0 0 40 40"><rect x="7.5" y="7.5" width="25" height="25" fill="none" stroke="#b9b9b9" stroke-width="2"/><path d="M5 5 h6 v6 h-6z M17 5 h6 v6 h-6z M29 5 h6 v6 h-6z M5 17 h6 v6 h-6z M29 17 h6 v6 h-6z M5 29 h6 v6 h-6z M17 29 h6 v6 h-6z M29 29 h6 v6 h-6z" fill="#b9b9b9"/><path d="M11 9 H17 M23 9 H29 M11 31 H17 M23 31 H29 M9 11 V17 M9 23 V29 M31 11 V17 M31 23 V29" stroke="#535353" stroke-width="3"/><circle cx="20" cy="20" r="2" fill="#b9b9b9"/></svg>
<div class="t" style="left:2624.50px;top:505.23px;font:bold 23.00px/1 'Liberation Sans',sans-serif;color:#f0f0f0;letter-spacing:0.704px;">Transform</div>
<svg class="b" style="left:2569.00px;top:551.20px;" width="40" height="40" viewBox="0 0 40 40"><path d="M5.5 2 V38" stroke="#b9b9b9" stroke-width="1.6"/><rect x="9" y="8" width="16" height="10" fill="#b9b9b9"/><rect x="9" y="23" width="26" height="10" fill="#b9b9b9"/></svg>
<div class="t" style="left:2624.50px;top:561.03px;font:bold 23.00px/1 'Liberation Sans',sans-serif;color:#f0f0f0;letter-spacing:0.175px;">Align</div>
<svg class="b" style="left:2569.00px;top:607.10px;" width="40" height="40" viewBox="0 0 40 40"><rect x="5" y="4" width="18" height="18" fill="#b9b9b9"/><rect x="15" y="13" width="20" height="21" fill="#b9b9b9"/><rect x="15" y="13" width="8" height="9" fill="#8c8c8c"/><rect x="12" y="10" width="3" height="3" fill="#535353" opacity="0"/></svg>
<div class="t" style="left:2624.50px;top:616.93px;font:bold 23.00px/1 'Liberation Sans',sans-serif;color:#f0f0f0;letter-spacing:0.229px;">Pathfinder</div>
<div class="b" style="left:2549.00px;top:659.60px;width:329.00px;height:2.40px;background:#383838;"></div>
<div class="b" style="left:2694.00px;top:668.00px;width:2.00px;height:8.00px;background:#3a3a3a;"></div><div class="b" style="left:2698.10px;top:668.00px;width:2.00px;height:8.00px;background:#3a3a3a;"></div><div class="b" style="left:2702.20px;top:668.00px;width:2.00px;height:8.00px;background:#3a3a3a;"></div><div class="b" style="left:2706.30px;top:668.00px;width:2.00px;height:8.00px;background:#3a3a3a;"></div><div class="b" style="left:2710.40px;top:668.00px;width:2.00px;height:8.00px;background:#3a3a3a;"></div><div class="b" style="left:2714.50px;top:668.00px;width:2.00px;height:8.00px;background:#3a3a3a;"></div><div class="b" style="left:2718.60px;top:668.00px;width:2.00px;height:8.00px;background:#3a3a3a;"></div><div class="b" style="left:2722.70px;top:668.00px;width:2.00px;height:8.00px;background:#3a3a3a;"></div><div class="b" style="left:2726.80px;top:668.00px;width:2.00px;height:8.00px;background:#3a3a3a;"></div><div class="b" style="left:2730.90px;top:668.00px;width:2.00px;height:8.00px;background:#3a3a3a;"></div>
<svg class="b" style="left:2569.00px;top:689.30px;" width="40" height="40" viewBox="0 0 40 40"><path d="M3 8.2 H37" stroke="#b9b9b9" stroke-width="1.6"/><path d="M3 17 H37" stroke="#b9b9b9" stroke-width="3.4"/><path d="M3 28.5 H37" stroke="#b9b9b9" stroke-width="5.4"/></svg>
<div class="t" style="left:2624.50px;top:699.13px;font:bold 23.00px/1 'Liberation Sans',sans-serif;color:#f0f0f0;letter-spacing:-0.146px;">Stroke</div>
<svg class="b" style="left:2569.00px;top:745.00px;" width="40" height="40" viewBox="0 0 40 40"><defs><linearGradient id="pg" x1="0" x2="1"><stop offset="0" stop-color="#303030"/><stop offset="1" stop-color="#e6e6e6"/></linearGradient></defs><rect x="4" y="9" width="32" height="22" fill="url(#pg)" stroke="#b9b9b9" stroke-width="1.6"/></svg>
<div class="t" style="left:2624.50px;top:754.83px;font:bold 23.00px/1 'Liberation Sans',sans-serif;color:#f0f0f0;letter-spacing:0.210px;">Gradient</div>
<div class="b" style="left:2549.00px;top:797.60px;width:329.00px;height:2.40px;background:#383838;"></div>
<div class="b" style="left:2694.00px;top:806.00px;width:2.00px;height:8.00px;background:#3a3a3a;"></div><div class="b" style="left:2698.10px;top:806.00px;width:2.00px;height:8.00px;background:#3a3a3a;"></div><div class="b" style="left:2702.20px;top:806.00px;width:2.00px;height:8.00px;background:#3a3a3a;"></div><div class="b" style="left:2706.30px;top:806.00px;width:2.00px;height:8.00px;background:#3a3a3a;"></div><div class="b" style="left:2710.40px;top:806.00px;width:2.00px;height:8.00px;background:#3a3a3a;"></div><div class="b" style="left:2714.50px;top:806.00px;width:2.00px;height:8.00px;background:#3a3a3a;"></div><div class="b" style="left:2718.60px;top:806.00px;width:2.00px;height:8.00px;background:#3a3a3a;"></div><div class="b" style="left:2722.70px;top:806.00px;width:2.00px;height:8.00px;background:#3a3a3a;"></div><div class="b" style="left:2726.80px;top:806.00px;width:2.00px;height:8.00px;background:#3a3a3a;"></div><div class="b" style="left:2730.90px;top:806.00px;width:2.00px;height:8.00px;background:#3a3a3a;"></div>
<svg class="b" style="left:2569.00px;top:827.70px;" width="40" height="40" viewBox="0 0 40 40"><rect x="5" y="3" width="30" height="34" fill="#b9b9b9"/><path d="M22 18.5 H29 M11 24 H29 M11 29.5 H29" stroke="#4a4a4a" stroke-width="1.6"/></svg>
<div class="t" style="left:2624.50px;top:837.53px;font:bold 23.00px/1 'Liberation Sans',sans-serif;color:#f0f0f0;letter-spacing:-0.366px;">Story</div>
<svg class="b" style="left:2569.00px;top:883.30px;" width="40" height="40" viewBox="0 0 40 40"><circle cx="16" cy="16" r="13.5" fill="#b9b9b9"/><path d="M12 5 Q16 8 13 11 Q10 14 14 17 Q18 19 15 24 Q13 28 17 30 L22 26 L20 10 Z" fill="#535353"/><path d="M22 4 Q26 8 25 13 L29 12 Z" fill="#535353"/><path d="M21 33 C18 28 17.5 27 19 26 C20.5 25 21.5 26.5 23 28.5 L19.5 14.5 C19 12 22 11.5 22.5 14 L24.5 22 L26 20.5 L27.5 22.5 L29 21.5 L30.5 23.5 L32 23 C35 26 35 30 33.5 34.5 L25 37.5 Z" fill="#b9b9b9" stroke="#535353" stroke-width="1.4"/></svg>
<div class="t" style="left:2624.50px;top:893.13px;font:bold 23.00px/1 'Liberation Sans',sans-serif;color:#f0f0f0;letter-spacing:0.351px;">Hyperlinks</div>
<svg class="b" style="left:2569.00px;top:939.40px;" width="40" height="40" viewBox="0 0 40 40"></svg>
<div class="t" style="left:2624.50px;top:949.23px;font:bold 23.00px/1 'Liberation Sans',sans-serif;color:#f0f0f0;letter-spacing:-0.484px;">Effects</div>
<div class="b" style="left:2549.00px;top:992.00px;width:329.00px;height:2.40px;background:#383838;"></div>
<div class="b" style="left:2694.00px;top:999.80px;width:2.00px;height:8.00px;background:#3a3a3a;"></div><div class="b" style="left:2698.10px;top:999.80px;width:2.00px;height:8.00px;background:#3a3a3a;"></div><div class="b" style="left:2702.20px;top:999.80px;width:2.00px;height:8.00px;background:#3a3a3a;"></div><div class="b" style="left:2706.30px;top:999.80px;width:2.00px;height:8.00px;background:#3a3a3a;"></div><div class="b" style="left:2710.40px;top:999.80px;width:2.00px;height:8.00px;background:#3a3a3a;"></div><div class="b" style="left:2714.50px;top:999.80px;width:2.00px;height:8.00px;background:#3a3a3a;"></div><div class="b" style="left:2718.60px;top:999.80px;width:2.00px;height:8.00px;background:#3a3a3a;"></div><div class="b" style="left:2722.70px;top:999.80px;width:2.00px;height:8.00px;background:#3a3a3a;"></div><div class="b" style="left:2726.80px;top:999.80px;width:2.00px;height:8.00px;background:#3a3a3a;"></div><div class="b" style="left:2730.90px;top:999.80px;width:2.00px;height:8.00px;background:#3a3a3a;"></div>
<svg class="b" style="left:2569.00px;top:1021.20px;" width="40" height="40" viewBox="0 0 40 40"><path d="M3 7.8 H37 M3 32.2 H37" stroke="#b9b9b9" stroke-width="1.6"/><path d="M3 13.5 H11 M3 20 H9 M3 26.5 H11 M29 13.5 H37 M31 20 H37 M29 26.5 H37" stroke="#b9b9b9" stroke-width="1.6"/><circle cx="20" cy="20" r="8.2" fill="#b9b9b9"/></svg>
<div class="t" style="left:2624.50px;top:1031.03px;font:bold 23.00px/1 'Liberation Sans',sans-serif;color:#f0f0f0;letter-spacing:0.610px;">Text Wrap</div>
<svg class="b" style="left:2569.00px;top:1077.30px;" width="40" height="40" viewBox="0 0 40 40"><path d="M22 6 H29.5 M22 6 V34 M28.5 6 V34" stroke="#b9b9b9" stroke-width="2" fill="none"/><path d="M22 5 H16 A8.5 8.5 0 0 0 16 22 H22 Z" fill="#b9b9b9"/></svg>
<div class="t" style="left:2624.50px;top:1087.13px;font:bold 23.00px/1 'Liberation Sans',sans-serif;color:#f0f0f0;letter-spacing:0.021px;">Paragraph</div>
<svg class="b" style="left:2569.00px;top:1133.10px;" width="40" height="40" viewBox="0 0 40 40"><g transform="translate(3 19)"><rect x="1.2" y="1.2" width="9" height="9" fill="#535353" stroke="#b9b9b9" stroke-width="2.2"/><rect x="6" y="6" width="9" height="9" fill="#535353" stroke="#b9b9b9" stroke-width="2.2"/><rect x="1.2" y="1.2" width="9" height="9" fill="none" stroke="#b9b9b9" stroke-width="2.2"/></g><path d="M29 2.5 H36 M29.5 2.5 V27 M35 2.5 V27" stroke="#b9b9b9" stroke-width="2" fill="none"/><path d="M30 1.5 H24 A7.5 7.5 0 0 0 24 16.5 H30 Z" fill="#b9b9b9"/></svg>
<div class="t" style="left:2624.50px;top:1142.93px;font:bold 23.00px/1 'Liberation Sans',sans-serif;color:#f0f0f0;letter-spacing:-0.007px;">Paragraph Styles</div>
<div class="b" style="left:2549.00px;top:1186.00px;width:329.00px;height:2.40px;background:#383838;"></div>
<div class="b" style="left:2694.00px;top:1194.00px;width:2.00px;height:8.00px;background:#3a3a3a;"></div><div class="b" style="left:2698.10px;top:1194.00px;width:2.00px;height:8.00px;background:#3a3a3a;"></div><div class="b" style="left:2702.20px;top:1194.00px;width:2.00px;height:8.00px;background:#3a3a3a;"></div><div class="b" style="left:2706.30px;top:1194.00px;width:2.00px;height:8.00px;background:#3a3a3a;"></div><div class="b" style="left:2710.40px;top:1194.00px;width:2.00px;height:8.00px;background:#3a3a3a;"></div><div class="b" style="left:2714.50px;top:1194.00px;width:2.00px;height:8.00px;background:#3a3a3a;"></div><div class="b" style="left:2718.60px;top:1194.00px;width:2.00px;height:8.00px;background:#3a3a3a;"></div><div class="b" style="left:2722.70px;top:1194.00px;width:2.00px;height:8.00px;background:#3a3a3a;"></div><div class="b" style="left:2726.80px;top:1194.00px;width:2.00px;height:8.00px;background:#3a3a3a;"></div><div class="b" style="left:2730.90px;top:1194.00px;width:2.00px;height:8.00px;background:#3a3a3a;"></div>
<svg class="b" style="left:2569.00px;top:1215.10px;" width="40" height="40" viewBox="0 0 40 40"></svg>
<div class="t" style="left:2624.50px;top:1224.93px;font:bold 23.00px/1 'Liberation Sans',sans-serif;color:#f0f0f0;letter-spacing:-0.494px;">Glyphs</div>
<svg class="b" style="left:2569.00px;top:1271.20px;" width="40" height="40" viewBox="0 0 40 40"><path d="M34 1 V37" stroke="#b9b9b9" stroke-width="1.8"/></svg>
<div class="t" style="left:2624.50px;top:1281.03px;font:bold 23.00px/1 'Liberation Sans',sans-serif;color:#f0f0f0;letter-spacing:0.186px;">Character</div>
<svg class="b" style="left:2569.00px;top:1327.00px;" width="40" height="40" viewBox="0 0 40 40"><g transform="translate(3 19)"><rect x="1.2" y="1.2" width="9" height="9" fill="#535353" stroke="#b9b9b9" stroke-width="2.2"/><rect x="6" y="6" width="9" height="9" fill="#535353" stroke="#b9b9b9" stroke-width="2.2"/><rect x="1.2" y="1.2" width="9" height="9" fill="none" stroke="#b9b9b9" stroke-width="2.2"/></g></svg>
<div class="t" style="left:2624.50px;top:1336.83px;font:bold 23.00px/1 'Liberation Sans',sans-serif;color:#f0f0f0;letter-spacing:-0.006px;">Character Styles</div>
<div class="b" style="left:2549.00px;top:1380.30px;width:329.00px;height:2.40px;background:#383838;"></div>
<div class="t" style="left:2580.83px;top:836.73px;font:bold 12.50px/1 'Liberation Serif',serif;color:#4a4a4a;">T</div>
<div class="t" style="left:2573.00px;top:942.53px;font:italic 36.00px/1 'Liberation Sans',sans-serif;color:#b9b9b9;">fx</div>
<div class="t" style="left:2572.00px;top:1217.17px;font:italic 38.00px/1 'Liberation Serif',serif;color:#b9b9b9;">A</div>
<div class="t" style="left:2573.00px;top:1276.07px;font:33.00px/1 'Liberation Sans',sans-serif;color:#b9b9b9;">A</div>
<div class="t" style="left:2585.00px;top:1326.45px;font:29.00px/1 'Liberation Sans',sans-serif;color:#b9b9b9;">A</div>
<div class="b" style="left:2878.00px;top:12.00px;width:2.00px;height:1610.00px;background:#393939;"></div>
<div class="b" style="left:977.50px;top:392.30px;width:673.00px;height:1200.50px;background:#ffffff;box-shadow:0 0 0 1px #333333;"></div>
<svg class="b" style="left:977.50px;top:392.30px;" width="673" height="220" viewBox="0 0 673 220"><rect width="673" height="220" fill="#282e32"/><path d="M0 40 C60 50 130 90 190 150 C120 130 50 100 0 80 Z" fill="#23292c"/><path d="M40 0 C120 20 200 10 260 40 C200 60 120 50 60 30 Z" fill="#23292c"/><path d="M150 60 C220 50 300 70 340 110 C280 120 200 100 150 60 Z" fill="#23292c"/><path d="M0 130 C50 140 110 180 130 220 L70 220 C50 190 20 160 0 150 Z" fill="#23292c"/><path d="M90 90 C150 110 200 160 215 220 L170 220 C160 170 130 130 90 90 Z" fill="#23292c"/><path d="M230 120 C270 140 300 180 305 220 L265 220 C262 180 250 150 230 120 Z" fill="#23292c"/><path d="M420 150 C470 120 540 110 600 60 C580 120 500 170 430 185 Z" fill="#23292c"/><path d="M480 200 C540 160 610 150 673 90 L673 140 C620 190 560 215 500 220 Z" fill="#23292c"/><path d="M520 40 C570 20 630 30 673 10 L673 50 C620 70 570 70 520 40 Z" fill="#23292c"/><path d="M560 220 C600 180 650 170 673 160 L673 220 Z" fill="#23292c"/><path d="M330 130 C380 150 410 190 400 220 L370 220 C370 190 350 160 330 130 Z" fill="#23292c"/><path d="M200 0 C260 20 330 10 380 30 C330 50 260 40 200 0 Z" fill="#23292c"/><g stroke="#0f1d1e" stroke-width="1.6" fill="none"><path d="M300 0 L455 8"/><path d="M320 0 L455 12.5"/><path d="M340 0 L455 17"/><path d="M360 0 L455 21.5"/><path d="M380 0 L455 26"/><path d="M400 0 L455 30.5"/><path d="M420 0 L455 35"/></g><path d="M238 220 C230 190 260 170 290 175 C300 150 340 150 345 180 C370 175 385 200 372 220 M290 175 C295 195 300 210 298 220" fill="none" stroke="#23292c" stroke-width="2"/></svg>
<svg class="b" style="left:1272.50px;top:438.60px;" width="72.1" height="52.6" viewBox="745 140 740 540"><path d="M850 145 C900 136 1000 140 1040 150 C1058 175 1058 200 1078 215 C1130 225 1160 212 1210 206 C1300 196 1390 225 1430 300 C1455 350 1445 400 1425 440 C1400 500 1395 560 1392 600 L1412 680 L1300 680 L1290 560 L1240 680 L1150 680 L1205 520 L1095 485 L1130 680 L1030 680 L1010 560 L975 680 L878 680 L965 480 L960 420 L830 392 C805 440 805 520 828 565 C835 575 843 570 845 555 C850 525 888 535 885 565 C880 600 840 620 810 595 C770 540 745 420 750 300 C755 200 800 155 850 145 Z" fill="#ffffff"/><path d="M1440 370 C1480 440 1490 540 1455 575 C1430 595 1400 580 1402 550 C1405 525 1435 528 1432 550" fill="none" stroke="#ffffff" stroke-width="14"/><path d="M1063 225 L1066 320 L1040 365" fill="none" stroke="#282e32" stroke-width="4"/></svg>
<div class="t" style="left:1210.00px;top:506.18px;font:22.00px/1 'Liberation Sans',sans-serif;color:#ffffff;letter-spacing:-0.051px;">WHITE  ELEPHANT</div>
<div class="t" style="left:1410.50px;top:508.07px;font:7.00px/1 'Liberation Sans',sans-serif;color:#ffffff;">™</div>
<div class="b" style="left:1210.00px;top:534.80px;width:202.00px;height:1.80px;background:#ffffff;"></div>
<div class="t" style="left:1268.20px;top:545.43px;font:bold 10.00px/1 'Liberation Sans',sans-serif;color:#ffffff;letter-spacing:1.872px;">PALM BEACH</div>
<svg class="b" style="left:977.50px;top:611.50px;overflow:hidden;" width="673" height="73" viewBox="0 0 673 73"><rect width="673" height="73" fill="#ffffff"/><polygon points="7.4,0.0 21.7,0.0 0.7,42.8 -0.0,42.8 -0.0,13.6" fill="#4a4e51"/><polygon points="25.1,0.0 38.0,0.0 40.1,15.7 27.8,72.7 6.1,72.7 23.8,15.7" fill="#4a4e51"/><polygon points="74.0,0.0 86.2,0.0 79.5,25.2 65.2,72.7 45.5,72.7 65.9,15.7" fill="#4a4e51"/><polygon points="119.5,0.0 146.7,0.0 144.0,14.3 142.0,24.5 133.8,25.2 110.7,48.3 101.2,72.7 76.7,72.7 90.3,48.3 114.8,19.8 126.3,14.3" fill="#4a4e51"/><polygon points="170.5,30.6 167.8,33.3 142.0,53.7 129.7,72.7 108.0,72.7 121.6,48.3 135.2,40.1 155.5,32.7" fill="#4a4e51"/><polygon points="175.9,32.7 179.3,32.7 178.6,42.8 167.8,72.7 146.0,72.7 159.6,52.4" fill="#4a4e51"/><polygon points="184.8,26.5 188.2,26.5 199.0,34.7 205.8,49.6 203.1,72.7 186.8,72.7 192.2,49.6 188.2,34.7" fill="#4a4e51"/><polygon points="199.7,0.0 210.6,0.0 209.9,17.7 207.2,19.1" fill="#4a4e51"/><polygon points="247.9,52.4 252.3,53.0 250.7,56.4 237.1,72.7 207.2,72.7 226.2,61.9" fill="#4a4e51"/><polygon points="265.6,57.8 267.2,57.8 267.2,72.7 253.4,72.7" fill="#4a4e51"/><polygon points="274.4,63.9 311.8,57.5 345.8,57.5 345.8,72.7 294.1,72.7" fill="#4a4e51"/><polygon points="328.4,57.8 355.6,57.8 380.1,62.5 408.6,70.0 419.5,72.7 328.4,72.7" fill="#4a4e51"/><polygon points="371.9,32.7 379.4,32.7 408.6,42.8 434.4,55.1 462.9,72.7 429.0,72.7 416.7,68.7 393.6,53.7 376.0,45.6 371.9,36.1" fill="#4a4e51"/><polygon points="423.5,19.8 441.2,19.8 482.0,29.3 509.1,42.8 529.5,59.2 555.3,70.0 563.5,72.7 520.0,72.7 468.4,52.4 441.2,36.1 426.2,23.8" fill="#4a4e51"/><polygon points="461.6,0.0 466.3,0.0 465.0,10.2 462.9,8.9" fill="#4a4e51"/><polygon points="478.6,1.4 483.3,1.4 483.3,6.2 478.6,6.2" fill="#4a4e51"/><polygon points="542.4,13.6 547.2,13.6 560.8,21.1 583.9,21.1 596.1,17.3 617.8,17.7 638.2,26.5 661.3,42.8 669.5,52.4 672.9,61.9 672.9,72.7 653.2,72.7 631.4,59.2 604.2,48.3 577.1,42.8 563.5,33.3 549.9,21.1" fill="#4a4e51"/><polygon points="544.5,49.6 549.9,46.7 562.1,46.7 590.7,54.4 612.4,65.9 626.0,72.7 563.5,72.7 555.3,61.9" fill="#4a4e51"/><polygon points="613.8,0.0 665.4,0.0 665.4,1.5 672.9,1.5 672.9,30.6 645.0,15.7 617.8,3.4" fill="#4a4e51"/><path d="M228.9 0.0 L233.0 8.9 L243.9 11.6 L250.7 19.8 L256.1 30.6 L262.9 35.4 L277.8 35.4 L290.1 27.9 L293.5 15.7 L292.8 0.0" fill="none" stroke="#4a4e51" stroke-width="2.6" stroke-linejoin="round"/><path d="M294.8 1.4 L303.6 14.3 L315.9 25.9 L325.4 28.6 L342.5 26.5 L332.5 29.3 L340.7 25.9 L352.9 15.7 L361.7 4.8 L364.4 0.0" fill="none" stroke="#4a4e51" stroke-width="2.6" stroke-linejoin="round"/></svg>
<svg class="b" style="left:977.50px;top:684.30px;overflow:hidden;" width="673" height="411.2" viewBox="0 0 673 411.2"><defs><linearGradient id="wall" x1="0" y1="0" x2="0" y2="1"><stop offset="0" stop-color="#a59e86"/><stop offset="0.025" stop-color="#b7b19b"/><stop offset="0.08" stop-color="#d0cbbb"/><stop offset="0.22" stop-color="#dedbd0"/><stop offset="1" stop-color="#dcd9d0"/></linearGradient><linearGradient id="sky" x1="0" y1="0" x2="0" y2="1"><stop offset="0" stop-color="#aedcf2"/><stop offset="0.45" stop-color="#c6e7f4"/><stop offset="0.75" stop-color="#dbeff6"/><stop offset="1" stop-color="#e8f3f6"/></linearGradient><linearGradient id="col" x1="0" x2="1"><stop offset="0" stop-color="#dfe0db"/><stop offset="0.35" stop-color="#f4f4f1"/><stop offset="0.8" stop-color="#ecece8"/><stop offset="1" stop-color="#d3d4cf"/></linearGradient><linearGradient id="tbl" x1="0" x2="1"><stop offset="0" stop-color="#95a7b8"/><stop offset="0.1" stop-color="#b4c6d6"/><stop offset="0.3" stop-color="#d0dde8"/><stop offset="0.5" stop-color="#e3eaef"/><stop offset="0.8" stop-color="#eef1f3"/><stop offset="1" stop-color="#e0e6ea"/></linearGradient><linearGradient id="tblv" x1="0" y1="0" x2="0" y2="1"><stop offset="0" stop-color="#ffffff" stop-opacity="0.45"/><stop offset="0.5" stop-color="#ffffff" stop-opacity="0"/><stop offset="1" stop-color="#6f8396" stop-opacity="0.18"/></linearGradient><linearGradient id="roof" x1="0" y1="0" x2="0" y2="1"><stop offset="0" stop-color="#cfa084"/><stop offset="0.6" stop-color="#e2c1a1"/><stop offset="1" stop-color="#d9ab86"/></linearGradient><linearGradient id="leafL" x1="0" y1="0" x2="0.3" y2="1"><stop offset="0" stop-color="#49ad2f"/><stop offset="0.6" stop-color="#2f9226"/><stop offset="1" stop-color="#1f6e22"/></linearGradient><linearGradient id="leafR" x1="0" y1="0" x2="0.25" y2="1"><stop offset="0" stop-color="#6cbd3a"/><stop offset="0.55" stop-color="#55ae2e"/><stop offset="1" stop-color="#3a9526"/></linearGradient><radialGradient id="vase" cx="0.4" cy="0.4" r="0.7"><stop offset="0" stop-color="#f8f6f0"/><stop offset="0.7" stop-color="#e6e1d5"/><stop offset="1" stop-color="#c9c0ae"/></radialGradient><pattern id="vp" width="17" height="19" patternUnits="userSpaceOnUse" x="3" y="2"><path d="M8.5 0 L17 9.5 L8.5 19 L0 9.5 Z M8.5 4.5 L13 9.5 L8.5 14.5 L4 9.5 Z" fill="none" stroke="#c4a87e" stroke-width="1.5"/></pattern><pattern id="tiles" width="7" height="5.5" patternUnits="userSpaceOnUse"><ellipse cx="3.5" cy="3.5" rx="3" ry="2.2" fill="#f0dcc4"/><path d="M0 5 H7" stroke="#b9805a" stroke-width="0.8"/></pattern><pattern id="fol" width="22" height="18" patternUnits="userSpaceOnUse"><rect width="22" height="18" fill="#6aa843"/><path d="M0 14 L9 2 L12 4 Z M10 18 L20 5 L22 8 Z" fill="#a9d47c"/><path d="M2 4 L8 12 M14 0 L20 9" stroke="#3c7a2c" stroke-width="1.6"/><circle cx="16" cy="14" r="2.5" fill="#d8ecc0"/></pattern><clipPath id="phc"><rect width="673" height="411"/></clipPath><filter id="bl" x="-5%" y="-5%" width="110%" height="110%"><feGaussianBlur stdDeviation="0.7"/></filter></defs><g clip-path="url(#phc)"><g filter="url(#bl)"><rect x="-5" y="-5" width="683" height="421" fill="url(#wall)"/><path d="M48.0 370 V107.5 A83.0 83.5 0 0 1 214.0 107.5 V370 Z" fill="#f3f3ee"/><path d="M256.0 330 V112.0 A85.2 88.0 0 0 1 426.5 112.0 V330 Z" fill="#f3f3ee"/><path d="M468.0 352 V107.5 A84.5 83.5 0 0 1 637.0 107.5 V352 Z" fill="#f3f3ee"/><path d="M62.0 330 V107.5 A75.5 75.5 0 0 1 213.0 107.5 V330 Z" fill="url(#sky)"/><path d="M258.0 330 V112.0 A83.2 80.0 0 0 1 424.5 112.0 V330 Z" fill="url(#sky)"/><path d="M469.5 330 V107.5 A75.2 75.5 0 0 1 620.0 107.5 V330 Z" fill="url(#sky)"/><g fill="#f4fafc" opacity="0.85"><ellipse cx="95" cy="144" rx="22" ry="4.5"/><ellipse cx="150" cy="148" rx="30" ry="4"/><ellipse cx="200" cy="141" rx="14" ry="4"/><ellipse cx="290" cy="143" rx="26" ry="5"/><ellipse cx="500" cy="146" rx="28" ry="4"/><ellipse cx="540" cy="150" rx="20" ry="3"/></g><rect x="120" y="158" width="95" height="10" fill="#dfe8ef"/><rect x="125" y="157" width="85" height="2" fill="#8d97b8"/><path d="M62 168 C80 152 95 152 108 148 C120 150 130 158 140 170 C160 165 180 160 213 168 V330 H62 Z" fill="#6fa848"/><path d="M62 172 C75 160 92 148 106 150 C120 165 128 195 132 235 L120 300 L62 330 Z" fill="#5da736"/><path d="M70 185 L100 152 L108 160 L85 215 Z M95 160 L120 175 L128 230 L110 200 Z" fill="#8fce5c" opacity="0.8"/><path d="M150 176 C170 166 195 166 213 172 V215 C190 220 165 210 150 200 Z" fill="#4c9a3a"/><path d="M135 200 C160 195 190 215 213 215 V330 H62 V300 C90 280 110 240 135 200 Z" fill="#7fb357"/><path d="M62 250 L120 230 L150 260 L100 330 H62 Z" fill="#a5cc7e" opacity="0.8"/><path d="M130 240 L175 225 L213 260 V300 L150 310 Z" fill="#93c068" opacity="0.8"/><path d="M160 250 C175 240 190 245 200 260 C195 290 170 300 160 285 Z" fill="#d9ead0" opacity="0.8"/><path d="M62 300 L110 250 L118 256 L75 330 H62 Z M120 330 L150 262 L158 266 L140 330 Z" fill="#5a9a3a" opacity="0.8"/><g stroke="#3f8a2c" stroke-width="1.4" opacity="0.7" fill="none"><path d="M105 152 L70 215 M105 152 L85 235 M105 152 L118 240 M105 152 L135 215 M105 152 L150 195"/><path d="M80 330 L125 240 M95 330 L150 255 M140 330 L175 262 M170 320 L200 262"/></g><g stroke="#d6ecb8" stroke-width="1.2" opacity="0.7" fill="none"><path d="M104 156 L76 225 M106 156 L100 240 M108 158 L128 228 M72 320 L112 250 M120 320 L160 260"/></g><path d="M150 178 C165 170 185 172 200 178 C205 190 190 200 170 198 C158 196 150 188 150 178 Z" fill="#3f8f3a" opacity="0.7"/><rect x="258" y="182" width="167" height="150" fill="#f1f3f2"/><path d="M336 132 L197 173 L197 180 L476 180 L476 173 Z" fill="url(#roof)"/><path d="M336 132 L197 173 L197 180 L476 180 L476 173 Z" fill="url(#tiles)" opacity="0.75"/><path d="M336 132 L300 143 L262 172 L197 173 Z" fill="#8f8fa8" opacity="0.35"/><rect x="197" y="178.5" width="279" height="3.6" fill="#7a5a42"/><rect x="205" y="182" width="270" height="5" fill="#e6e2da"/><g fill="#9a6a3c"><rect x="262" y="183" width="5" height="4"/><rect x="285" y="183" width="5" height="4"/><rect x="308" y="183" width="5" height="4"/><rect x="331" y="183" width="5" height="4"/><rect x="354" y="183" width="5" height="4"/><rect x="377" y="183" width="5" height="4"/><rect x="400" y="183" width="5" height="4"/></g><g fill="#1f2430"><path d="M337 193 l3.5 3.5 l-3.5 3.5 l-3.5 -3.5z M328 200.5 l3.5 3.5 l-3.5 3.5 l-3.5 -3.5z M346 200.5 l3.5 3.5 l-3.5 3.5 l-3.5 -3.5z M337 208 l3.5 3.5 l-3.5 3.5 l-3.5 -3.5z"/></g><rect x="469.5" y="159" width="151" height="9" fill="#c9908a" opacity="0.8"/><path d="M469.5 172 C490 162 520 165 545 160 C560 165 580 170 620 166 V182 H469.5 Z" fill="#79b35a"/><path d="M478 182 L492 173 H590 L600 182 Z" fill="#e08a68"/><path d="M553 158 l5 -8 l5 8 l-2 15 h-6 z" fill="#4f9a3c"/><rect x="469.5" y="181" width="151" height="20" fill="#e9ece9"/><g stroke="#2a2e36" stroke-width="1.2"><path d="M473 182 V200"/><path d="M481 182 V200"/><path d="M489 182 V200"/><path d="M497 182 V200"/><path d="M505 182 V200"/><path d="M513 182 V200"/><path d="M521 182 V200"/><path d="M529 182 V200"/><path d="M537 182 V200"/><path d="M545 182 V200"/><path d="M553 182 V200"/><path d="M561 182 V200"/><path d="M569 182 V200"/><path d="M577 182 V200"/><path d="M585 182 V200"/><path d="M593 182 V200"/><path d="M601 182 V200"/><path d="M609 182 V200"/><path d="M617 182 V200"/></g><rect x="469.5" y="180.5" width="151" height="2.2" fill="#23262c"/><rect x="463" y="200.5" width="157" height="9.5" fill="#232a38"/><rect x="463" y="210" width="157" height="125" fill="#eef2f3"/><rect x="585" y="142" width="35" height="40" fill="#f2f2ee"/><path d="M563 136 L620 118 V143 L578 143 Z" fill="#d9a688"/><path d="M566 138 L620 126 V143 L578 143 Z" fill="#b87f5c" opacity="0.6"/><ellipse cx="563.5" cy="162" rx="7.5" ry="20" fill="#2c3444"/><ellipse cx="612" cy="162" rx="8" ry="21" fill="#2c3444"/><path d="M609 124 l8 -8 l3 2 v8 z" fill="#5f9a4a"/><rect x="497" y="248" width="80" height="54" fill="#39424d"/><g fill="#a9c4d6"><rect x="500.5" y="251" width="9" height="10" opacity="0.95"/><rect x="500.5" y="263" width="9" height="10" opacity="0.83"/><rect x="500.5" y="275" width="9" height="10" opacity="0.71"/><rect x="500.5" y="287" width="9" height="10" opacity="0.59"/><rect x="511.5" y="251" width="9" height="10" opacity="0.95"/><rect x="511.5" y="263" width="9" height="10" opacity="0.83"/><rect x="511.5" y="275" width="9" height="10" opacity="0.71"/><rect x="511.5" y="287" width="9" height="10" opacity="0.59"/><rect x="522.5" y="251" width="9" height="10" opacity="0.95"/><rect x="522.5" y="263" width="9" height="10" opacity="0.83"/><rect x="522.5" y="275" width="9" height="10" opacity="0.71"/><rect x="522.5" y="287" width="9" height="10" opacity="0.59"/><rect x="544.5" y="251" width="9" height="10" opacity="0.95"/><rect x="544.5" y="263" width="9" height="10" opacity="0.83"/><rect x="544.5" y="275" width="9" height="10" opacity="0.71"/><rect x="544.5" y="287" width="9" height="10" opacity="0.59"/><rect x="555.5" y="251" width="9" height="10" opacity="0.95"/><rect x="555.5" y="263" width="9" height="10" opacity="0.83"/><rect x="555.5" y="275" width="9" height="10" opacity="0.71"/><rect x="555.5" y="287" width="9" height="10" opacity="0.59"/><rect x="566.5" y="251" width="9" height="10" opacity="0.95"/><rect x="566.5" y="263" width="9" height="10" opacity="0.83"/><rect x="566.5" y="275" width="9" height="10" opacity="0.71"/><rect x="566.5" y="287" width="9" height="10" opacity="0.59"/></g><rect x="497" y="300" width="82" height="4" fill="#27303f"/><rect x="48" y="112" width="14.5" height="250" fill="#e6e9e6"/><rect x="620" y="112" width="17" height="240" fill="#eceeeb"/><rect x="219.5" y="148" width="38.1" height="190" fill="url(#col)"/><path d="M206.5 109 H266 L263 116 C260 128 259.6 138 258.6 147 H218.5 C217.5 138 212.5 128 209.5 116 Z" fill="#f0f0ec"/><path d="M224.25 118 L246.25 132 M248.25 118 L226.25 132 M236.25 122 V138" stroke="#b9bab4" stroke-width="1.6" fill="none"/><rect x="218.5" y="147" width="40.1" height="2" fill="#dcdcd6"/><rect x="425.8" y="148" width="36.7" height="190" fill="url(#col)"/><path d="M415 109 H474 L471 116 C468 128 464.5 138 463.5 147 H424.8 C423.8 138 421 128 418 116 Z" fill="#f0f0ec"/><path d="M432.5 118 L454.5 132 M456.5 118 L434.5 132 M444.5 122 V138" stroke="#b9bab4" stroke-width="1.6" fill="none"/><rect x="424.8" y="147" width="38.7" height="2" fill="#dcdcd6"/><path d="M0 356 H48 V411 H0 Z" fill="#6f6a64"/><rect x="0" y="356" width="48" height="6" fill="#8e9092"/><path d="M0 375 H30 V411 H0 Z" fill="#3d3f42"/><path d="M637 349 H673 V411 H620 V365 Z" fill="#3a3d42"/><rect x="637" y="349" width="36" height="8" fill="#6e675f"/><path d="M100 311 L246 296 V301 L104 316 Z" fill="#24272a"/><path d="M100 311 L112 340 L106 344 L98 316 Z" fill="#24272a"/><path d="M109 317 L248 302 V345 L112 345 Z" fill="#8d8c8a"/><path d="M50 310 C60 302 75 306 78 312 L70 350 H50 Z" fill="#c9c6c0"/><path d="M55 325 L72 322 L68 352 H55 Z" fill="#555a5e"/><path d="M460 296 L596 306 V311 L460 301 Z" fill="#24272a"/><path d="M590 306 L596 306 L592 345 H584 Z" fill="#24272a"/><path d="M485 306 L586 310 L578 342 L470 342 Z" fill="#8b8a89"/><path d="M603 299 L637 303 V352 H616 Z" fill="#cfc8bb"/><path d="M603 299 L620 302 L628 352 H614 Z" fill="#4a4f55"/><rect x="17.5" y="223.5" width="649" height="6.6" fill="#1b1c1f"/><rect x="18" y="224" width="12.5" height="148" fill="#1b1c1f"/><rect x="655" y="224" width="11.5" height="141" fill="#1b1c1f"/><rect x="30" y="232" width="8" height="130" fill="#c9c2b6"/><rect x="32" y="233" width="7" height="14" fill="#15161a"/><rect x="32" y="330" width="7" height="14" fill="#15161a"/><rect x="646" y="232" width="9" height="120" fill="#d0c8bb"/><rect x="646" y="233" width="7" height="12" fill="#15161a"/><rect x="646" y="325" width="7" height="14" fill="#15161a"/><rect x="42.1" y="229" width="4.8" height="135" fill="#1b1c1f"/><rect x="66.2" y="229" width="4.8" height="135" fill="#1b1c1f"/><rect x="90.7" y="229" width="4.8" height="135" fill="#1b1c1f"/><rect x="115.2" y="229" width="4.8" height="135" fill="#1b1c1f"/><rect x="139.6" y="229" width="4.8" height="135" fill="#1b1c1f"/><rect x="164.2" y="229" width="4.8" height="135" fill="#1b1c1f"/><rect x="188.2" y="229" width="4.8" height="135" fill="#1b1c1f"/><rect x="212.1" y="229" width="4.8" height="135" fill="#1b1c1f"/><rect x="257.5" y="229" width="4.8" height="135" fill="#1b1c1f"/><rect x="281.2" y="229" width="4.8" height="135" fill="#1b1c1f"/><rect x="231" y="229" width="8.5" height="100" fill="#1b1c1f"/><rect x="444.6" y="229" width="4.8" height="80" fill="#1b1c1f"/><rect x="469.3" y="229" width="4.8" height="80" fill="#1b1c1f"/><rect x="493" y="229" width="4.8" height="80" fill="#1b1c1f"/><rect x="516.8" y="229" width="4.8" height="80" fill="#1b1c1f"/><rect x="540.5" y="229" width="4.8" height="80" fill="#1b1c1f"/><rect x="564.2" y="229" width="4.8" height="80" fill="#1b1c1f"/><rect x="588.6" y="229" width="4.8" height="80" fill="#1b1c1f"/><rect x="611.6" y="229" width="4.8" height="135" fill="#1b1c1f"/><rect x="635.3" y="229" width="4.8" height="135" fill="#1b1c1f"/><path d="M10.5 399 C10 390 25 372 58.7 357.9 C90 346 150 334 196.4 328.8 C260 320 400 318 480 324 C540 329 600 342 623.2 351.8 C645 362 655 377 653 388 C650 398 643 406 637 413 L14 413 Z" fill="url(#tbl)"/><path d="M10.5 399 C10 390 25 372 58.7 357.9 C90 346 150 334 196.4 328.8 C260 320 400 318 480 324 C540 329 600 342 623.2 351.8 C645 362 655 377 653 388 C650 398 643 406 637 413 L14 413 Z" fill="url(#tblv)"/><rect x="425" y="335" width="37" height="78" fill="#ffffff" opacity="0.35"/><rect x="48" y="360" width="15" height="53" fill="#ffffff" opacity="0.25"/><path d="M505 411 C540 400 590 398 625 400 L600 413 H505 Z" fill="#8fa08c" opacity="0.7"/><path d="M345 369.5 C328 378 320 395 325 413 H405 C410 395 404 378 389 369.5 Z" fill="#b4bfc7"/><path d="M345 369.5 C328 378 320 395 325 413 H405 C410 395 404 378 389 369.5 Z" fill="url(#vp)" opacity="0.45"/><path d="M227 365 H262 L267.5 400 C255 404 234 404 221.6 400 Z" fill="#4d5964"/><path d="M238 365 H252 L254 402 H236 Z" fill="#77848e" opacity="0.6"/><path d="M221 401 C235 406 255 406 268 401 L270 413 H220 Z" fill="#7d8c99" opacity="0.6"/><ellipse cx="245" cy="353" rx="62.5" ry="12.5" fill="#2d3742"/><circle cx="201" cy="343" r="13" fill="#86b038"/><circle cx="224" cy="349" r="14.5" fill="#8dbb3a"/><circle cx="256" cy="349" r="15" fill="#a3bf4c"/><circle cx="283" cy="345" r="14" fill="#8dbb3a"/><circle cx="218" cy="320" r="14" fill="#8dbb3a"/><circle cx="230" cy="333" r="14.5" fill="#9dc048"/><circle cx="270" cy="311" r="11.5" fill="#a4c94a"/><circle cx="279" cy="325" r="13" fill="#95bd42"/><circle cx="251.5" cy="319" r="13" fill="#ecc935"/><circle cx="294" cy="336" r="8" fill="#ecc935"/><ellipse cx="260" cy="333" rx="16" ry="12" fill="#ecc935"/><circle cx="229" cy="330" r="1.6" fill="#5a4a20"/><circle cx="279" cy="323" r="1.6" fill="#5a4a20"/><circle cx="281" cy="346" r="1.8" fill="#5a4a20"/><path d="M183 350 C200 362 290 362 307 350 C300 368 190 368 183 350 Z" fill="#2d3742"/><path d="M171 228 C230 226 300 232 323 246 C334 255 338 262 332 272 C320 282 300 282 294 280 C262 262 215 247 178 240 Z" fill="url(#leafL)"/><path d="M294 280 C310 275 325 265 335 262 C345 268 350 285 346 296 L330 300 C312 305 295 318 285 318 C278 300 280 288 294 280 Z" fill="#1d5a2a"/><path d="M332 262 C345 262 368 270 371 283 C368 292 350 296 332 296 Z" fill="#3f9a30"/><path d="M384.5 275.3 L424.3 253.8 L458 240 L497 237 L470.2 253.8 L439.6 267.6 L409 278.3 Z" fill="#1c3d24"/><path d="M381 196 L386 196 L381 294 L373 294 Z" fill="#4a8a2c"/><path d="M404 196 L408 198 L382 292 L378 292 Z" fill="#5a8a30"/><path d="M296 224 C304 214 320 216 330 224 C345 236 352 250 352 262 C340 258 330 246 322 238 C312 236 302 232 296 224 Z" fill="#d8253a"/><path d="M387 223 L406 202 L420 211 L412 226 L394 241 Z" fill="#ec4f28"/><path d="M400 204 C408 198 418 202 420 211 L408 215 Z" fill="#d8253a"/><path d="M367.5 205 L378.4 226 L372 229 Z M355.4 232.4 L383 240 L378 244.7 Z M418 220 L439.6 218.6 L421 226 Z M415 232.4 L430.4 236 L412 237 Z" fill="#ec4f28"/><path d="M363 255 L384.5 246 L396.8 240 L387.6 257 L383 260 Z" fill="#f0b62e"/><path d="M386 264.5 L418 246 L453.4 227.8 L430.4 247.7 L401.4 263 Z" fill="#e8452a"/><path d="M386 256 L420 254 L426 257 L390 261 Z" fill="#3a8a2c"/><path d="M347 293.6 H383 C383.5 298 388 300 395 305 C405 313 408.5 324 408.5 333 C408.5 346 401 358 391 366 L389 369.5 H345 L343 366 C331 358 321.5 346 321.5 333 C321.5 324 326 313 336 305 C342 300 346.5 298 347 293.6 Z" fill="url(#vase)"/><path d="M347 293.6 H383 C383.5 298 388 300 395 305 C405 313 408.5 324 408.5 333 C408.5 346 401 358 391 366 L389 369.5 H345 L343 366 C331 358 321.5 346 321.5 333 C321.5 324 326 313 336 305 C342 300 346.5 298 347 293.6 Z" fill="url(#vp)"/><ellipse cx="365" cy="294" rx="18" ry="2.5" fill="#3d4a2c"/><path d="M404.4 302.8 C404 295 412 288 424.3 286 C435 286 445 290 455 295 L500.8 316.6 L546.7 339.5 L592.6 365.5 L634.7 390 L629.3 396 L623.2 401.5 C612 401 602 400 592.6 397.7 L546.7 379.3 L500.8 361 L462.5 347.2 L432 333.4 C420 327 408 316 404.4 302.8 Z" fill="url(#leafR)"/><path d="M516 329 C512 340 508 352 507 363" stroke="#86cf4a" stroke-width="1.6" fill="none"/><path d="M412 318 L432 333.4 L462.5 347.2 L500.8 361 L546.7 379.3 L592.6 397.7 L623.2 401.5 L610 394 L560 378 L500 355 L450 336 Z" fill="#2f8a22" opacity="0.55"/></g></g></svg>
<div class="t" style="left:1127.50px;top:1192.06px;font:46.00px/1 'Liberation Sans',sans-serif;color:#1f282c;letter-spacing:1.737px;">IF PRIVACY IS A</div>
<div class="t" style="left:1142.00px;top:1249.06px;font:46.00px/1 'Liberation Sans',sans-serif;color:#1f282c;letter-spacing:0.890px;">TOP PRIORITY,</div>
<div class="t" style="left:1192.40px;top:1313.85px;font:bold 50.50px/1 'Liberation Sans',sans-serif;color:#a9b5a0;letter-spacing:7.940px;-webkit-text-stroke:2.8px #a9b5a0;">MAY WE</div>
<div class="t" style="left:1177.40px;top:1381.25px;font:bold 50.50px/1 'Liberation Sans',sans-serif;color:#a9b5a0;letter-spacing:4.292px;-webkit-text-stroke:2.8px #a9b5a0;">SUGGEST</div>
<div class="t" style="left:1092.00px;top:1447.85px;font:bold 50.50px/1 'Liberation Sans',sans-serif;color:#a9b5a0;letter-spacing:7.204px;-webkit-text-stroke:2.8px #a9b5a0;">STAYING ATOP</div>
<div class="t" style="left:1132.40px;top:1515.25px;font:bold 50.50px/1 'Liberation Sans',sans-serif;color:#a9b5a0;letter-spacing:5.374px;-webkit-text-stroke:2.8px #a9b5a0;">OUR HOTEL.</div>
<div class="b" style="left:977px;top:1556px;width:674px;height:36px;background:linear-gradient(rgba(0,0,0,0),rgba(0,0,0,0.09));"></div>
<div class="b" style="left:84.00px;top:1592.00px;width:2461.00px;height:20.00px;background:#4b4b4b;"></div>
<div class="b" style="left:84.00px;top:1590.00px;width:32.00px;height:2.00px;background:#4b4b4b;"></div>
<div class="t" style="left:112.00px;top:1598.87px;font:20.00px/1 'Liberation Sans',sans-serif;color:#dcdcdc;letter-spacing:0.325px;">31.5%</div>
<svg class="b" style="left:196.00px;top:1603.00px;" width="18" height="12" viewBox="0 0 18 12"><path d="M2 2 L9 9 L16 2" fill="none" stroke="#dcdcdc" stroke-width="2.2"/></svg>
<svg class="b" style="left:236.00px;top:1602.00px;" width="20" height="16" viewBox="0 0 20 16"><path d="M3 0 V16" stroke="#8a8a8a" stroke-width="3"/><path d="M18 0 L6 9 L18 18 Z" fill="#8a8a8a"/></svg>
<svg class="b" style="left:280.00px;top:1602.00px;" width="16" height="16" viewBox="0 0 16 16"><path d="M14 0 L2 9 L14 18 Z" fill="#8a8a8a"/></svg>
<div class="b" style="left:320.00px;top:1593.50px;width:177.00px;height:30.00px;background:#383838;border:2px solid #707070;border-radius:5px;box-sizing:border-box;"></div>
<div class="b" style="left:460.00px;top:1596.00px;width:2.00px;height:20.00px;background:#6e6e6e;"></div>
<div class="t" style="left:329.00px;top:1598.87px;font:20.00px/1 'Liberation Sans',sans-serif;color:#dcdcdc;">1</div>
<svg class="b" style="left:469.00px;top:1603.00px;" width="18" height="12" viewBox="0 0 18 12"><path d="M2 2 L9 9 L16 2" fill="none" stroke="#dcdcdc" stroke-width="2.2"/></svg>
<svg class="b" style="left:521.00px;top:1602.00px;" width="16" height="16" viewBox="0 0 16 16"><path d="M2 0 L14 9 L2 18 Z" fill="#8a8a8a"/></svg>
<svg class="b" style="left:560.00px;top:1602.00px;" width="20" height="16" viewBox="0 0 20 16"><path d="M17 0 V16" stroke="#8a8a8a" stroke-width="3"/><path d="M2 0 L14 9 L2 18 Z" fill="#8a8a8a"/></svg>
<svg class="b" style="left:612.00px;top:1595.00px;" width="28" height="28" viewBox="0 0 28 28"><circle cx="14" cy="14" r="11" fill="none" stroke="#cfcfcf" stroke-width="3"/><path d="M10 8 H16 L19 11 V20 H10 Z" fill="#cfcfcf"/></svg>
<div class="t" style="left:676.00px;top:1598.87px;font:20.00px/1 'Liberation Sans',sans-serif;color:#dcdcdc;letter-spacing:0.918px;">Digital Publishing</div>
<svg class="b" style="left:880.00px;top:1603.00px;" width="18" height="12" viewBox="0 0 18 12"><path d="M2 2 L9 9 L16 2" fill="none" stroke="#dcdcdc" stroke-width="2.2"/></svg>
<div class="b" style="left:928.00px;top:1596.00px;width:22.00px;height:22.00px;background:#d93a30;border-radius:50%;"></div>
<div class="t" style="left:961.00px;top:1598.87px;font:20.00px/1 'Liberation Sans',sans-serif;color:#dcdcdc;letter-spacing:0.729px;">2 errors</div>
<svg class="b" style="left:1084.00px;top:1603.00px;" width="18" height="12" viewBox="0 0 18 12"><path d="M2 2 L9 9 L16 2" fill="none" stroke="#b0b0b0" stroke-width="2.2"/></svg>
<svg class="b" style="left:2479.00px;top:1597.00px;" width="30" height="14" viewBox="0 0 30 14"><rect x="1" y="1" width="28" height="20" fill="none" stroke="#d0d0d0" stroke-width="2"/><path d="M15 1 V20" stroke="#d0d0d0" stroke-width="2"/></svg>
<svg class="b" style="left:2530.00px;top:1598.00px;" width="12" height="10" viewBox="0 0 12 10"><circle cx="9" cy="3" r="1" fill="#8a8a8a"/><circle cx="5" cy="7" r="1" fill="#8a8a8a"/><circle cx="9" cy="7" r="1" fill="#8a8a8a"/></svg>
</div></body></html>
